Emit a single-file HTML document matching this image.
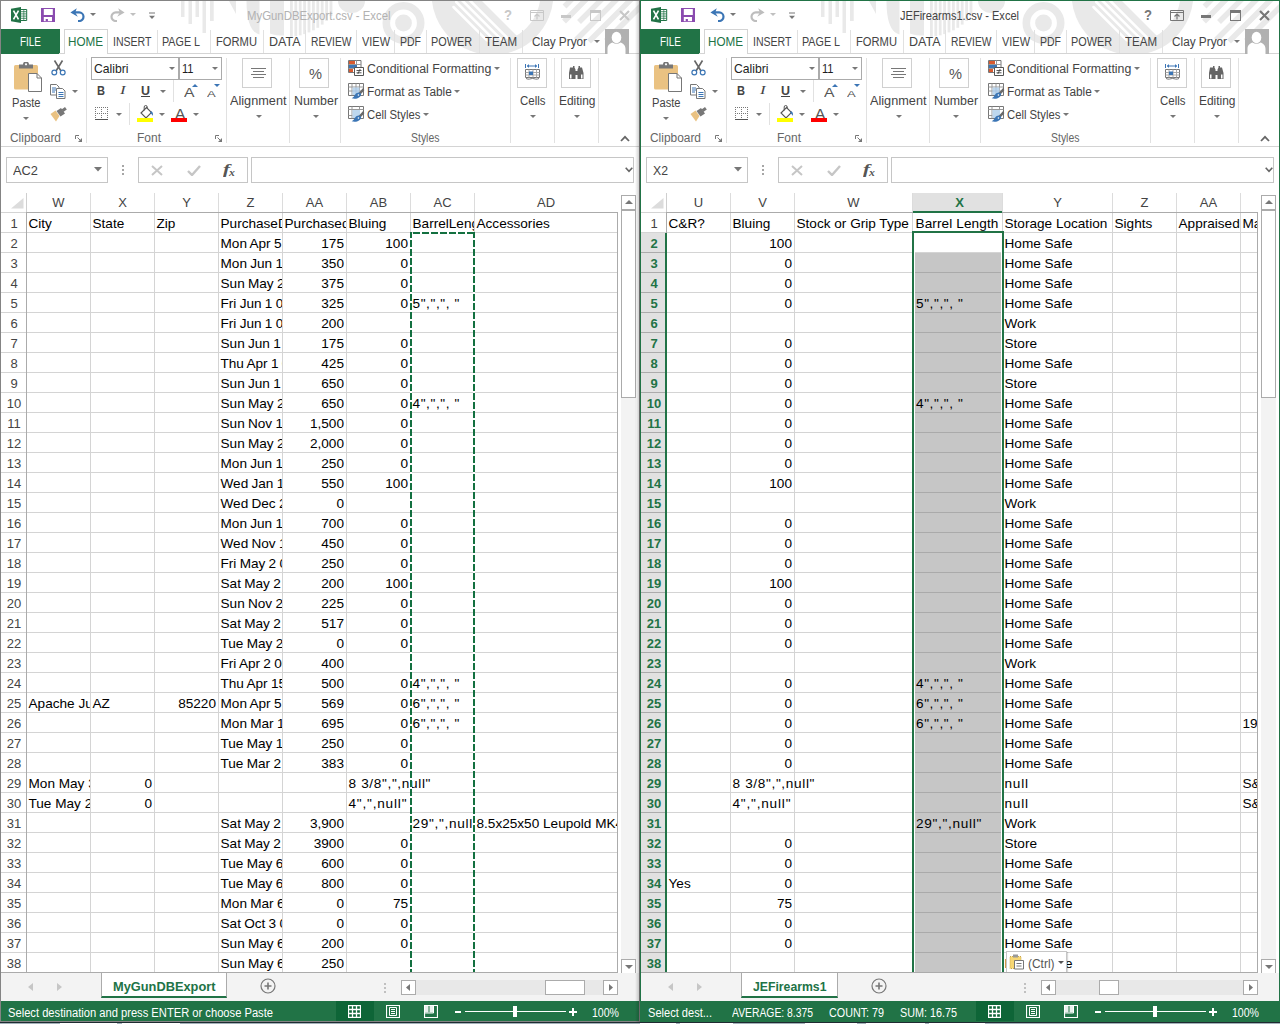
<!DOCTYPE html>
<html lang="en"><head><meta charset="utf-8"><title>Excel - MyGunDBExport.csv / JEFirearms1.csv</title>
<style>
html,body{margin:0;padding:0}
body{width:1280px;height:1024px;overflow:hidden;background:#8a8f96;font-family:"Liberation Sans",sans-serif;position:relative}
.win{position:absolute;top:0;width:640px;height:1022px;background:#fff;overflow:hidden}
.b{position:absolute;display:block}
.t{position:absolute;white-space:nowrap;line-height:20px;height:20px;transform-origin:0 50%}
.c{position:absolute;height:19px;line-height:19px;font-size:13.6px;color:#000;white-space:nowrap;overflow:hidden;box-sizing:border-box;padding:1px 2px 0 1.5px}
.c.r{text-align:right}
.rh{position:absolute;left:1px;width:26px;height:19px;line-height:22px;font-size:13px;color:#444;text-align:center}
.ch{position:absolute;top:193px;height:19px;line-height:19px;font-size:13px;color:#444;text-align:center}
</style></head>
<body>
<div class="b" style="left:0;top:1022px;width:1280px;height:1px;background:#1f2b31"></div>
<div class="b" style="left:0;top:1023px;width:1280px;height:1px;background:#a3b2ba"></div>
<div class="b" style="left:60px;top:1023px;width:57px;height:1px;background:#fff"></div>
<div class="b" style="left:122px;top:1023px;width:58px;height:1px;background:#fff"></div>
<div class="b" style="left:640px;top:1023px;width:36px;height:1px;background:#fff"></div>
<div class="b" style="left:680px;top:1023px;width:53px;height:1px;background:#fff"></div>
<div class="b" style="left:805px;top:1023px;width:52px;height:1px;background:#fff"></div>
<div class="b" style="left:866px;top:1023px;width:59px;height:1px;background:#fff"></div>
<div class="b" style="left:929px;top:1023px;width:56px;height:1px;background:#fff"></div>
<div class="win" style="left:0">
<svg class="b" style="left:0;top:0" width="640" height="53" viewBox="0 0 640 53"><defs><clipPath id="cpIn"><circle cx="492.5" cy="-6" r="48"/></clipPath></defs><rect x="181" y="1" width="3.5" height="16" fill="#e9e9e9"/><rect x="188.5" y="1" width="3.5" height="23" fill="#e9e9e9"/><rect x="195.5" y="1" width="3.5" height="16" fill="#e9e9e9"/><rect x="202.5" y="1" width="3.5" height="32" fill="#e9e9e9"/><rect x="210" y="1" width="3.7" height="20" fill="#e9e9e9"/><path d="M229 1h7v13z" fill="#e9e9e9"/><path d="M246.5 1h13v33.5c-8-2-13-12-13-33.5z" fill="#e9e9e9"/><path d="M270 1h14v34.5c-5 0-10-.3-14-2z" fill="#e9e9e9"/><rect x="290.0" y="1" width="2.8" height="35.8" fill="#e9e9e9"/><rect x="294.4" y="1" width="2.8" height="35.2" fill="#e9e9e9"/><rect x="298.8" y="1" width="2.8" height="34.3" fill="#e9e9e9"/><rect x="303.2" y="1" width="2.8" height="33.1" fill="#e9e9e9"/><rect x="307.6" y="1" width="2.8" height="31.4" fill="#e9e9e9"/><rect x="312.0" y="1" width="2.8" height="29.3" fill="#e9e9e9"/><rect x="316.4" y="1" width="2.8" height="26.8" fill="#e9e9e9"/><rect x="320.8" y="1" width="2.8" height="23.6" fill="#e9e9e9"/><rect x="325.2" y="1" width="2.8" height="19.8" fill="#e9e9e9"/><rect x="329.6" y="1" width="2.8" height="15.1" fill="#e9e9e9"/><path d="M338 1a13.5 12 0 0 0 27 0z" fill="#e9e9e9"/><circle cx="403.5" cy="23" r="17.2" fill="none" stroke="#e9e9e9" stroke-width="7.6"/><circle cx="403.5" cy="23" r="8.4" fill="#e9e9e9"/><circle cx="492.5" cy="-6" r="61" fill="#e9e9e9"/><g clip-path="url(#cpIn)"><path d="M481 0l60 60h80v-80h-140z" fill="#fff"/><path d="M453.5 7l60 60" stroke="#fff" stroke-width="2.5" stroke-linecap="round"/><path d="M456.2 2l60 60" stroke="#fff" stroke-width="2.5" stroke-linecap="round"/><path d="M461.8 0l60 60" stroke="#fff" stroke-width="2.5" stroke-linecap="round"/><path d="M469.5 0l60 60" stroke="#fff" stroke-width="2.5" stroke-linecap="round"/></g><path d="M564.5 6.5L575 -4" stroke="#e9e9e9" stroke-width="5.5"/><path d="M564 21.5L590 -4.5" stroke="#e9e9e9" stroke-width="5.5"/><path d="M579 22L606 -5" stroke="#e9e9e9" stroke-width="5.5"/><path d="M576 40L621 -5" stroke="#e9e9e9" stroke-width="5.5"/><path d="M589 41.5L640 -9.5" stroke="#e9e9e9" stroke-width="5.5"/><path d="M606 41L650 -3" stroke="#e9e9e9" stroke-width="5.5"/></svg>
<svg class="b" style="left:11px;top:7px" width="17" height="16" viewBox="0 0 17 16"><path d="M9.500 2.500h6.200v11h-6.200z" fill="#fff" stroke="#217346" stroke-width="1"/><path d="M10 4.700h5.500M10 6.900h5.500M10 9.100h5.500M10 11.300h5.500" stroke="#217346" stroke-width=".8"/><path d="M12.800 2.500v11" stroke="#217346" stroke-width=".7"/><path d="M0 1.800l10-1.800v16l-10-1.800z" fill="#217346"/><path d="M2.500 3.600l5 8.800M7.500 3.600l-5 8.800" stroke="#fff" stroke-width="1.600"/></svg>
<svg class="b" style="left:41px;top:8px" width="14" height="14" viewBox="0 0 14 14"><path d="M0 0h14v14h-14z" fill="#8a4baf"/><path d="M2.800 1h9v6h-9z" fill="#fff"/><path d="M2.800 9h8.200v4.200h-8.200z" fill="#fff"/><path d="M4.700 11h2.200v2.200h-2.200z" fill="#8a4baf"/></svg>
<svg class="b" style="left:70px;top:8px" width="15" height="14" viewBox="0 0 15 14"><path d="M3.500 4.400h5.700a4.300 4.300 0 0 1 0 8.600h-1.200" fill="none" stroke="#3b75b5" stroke-width="2.200"/><path d="M6.800 0.200l-6.400 4.200l7.400 4.400l-2.600-4.400z" fill="#3b75b5"/></svg>
<svg class="b" style="left:90px;top:13px" width="6" height="4" viewBox="0 0 6 4"><path d="M0 0h6l-3.0 3.0z" fill="#777"/></svg>
<svg class="b" style="left:110px;top:8px" width="15" height="14" viewBox="0 0 15 14"><path d="M11.500 4.400h-5.700a4.300 4.300 0 0 0 0 8.600h1.200" fill="none" stroke="#bdbdbd" stroke-width="2.200"/><path d="M8.200 0.200l6.400 4.200l-7.400 4.400l2.600-4.400z" fill="#bdbdbd"/></svg>
<svg class="b" style="left:130px;top:13px" width="6" height="4" viewBox="0 0 6 4"><path d="M0 0h6l-3.0 3.0z" fill="#c0c0c0"/></svg>
<svg class="b" style="left:149px;top:12px" width="6" height="7" viewBox="0 0 6 7"><path d="M0 1h6" stroke="#777" stroke-width="1"/><path d="M0 3.700h6l-3 3.200z" fill="#777"/></svg>
<span class="t" style="left:247.0px;top:5.50px;font-size:13px;color:#b2b2b2;transform:scaleX(0.8751);">MyGunDBExport.csv - Excel</span>
<span class="t" style="left:503.5px;top:5.15px;font-size:14px;color:#c8c8c8;transform:scaleX(0.9355);font-weight:bold;">?</span>
<svg class="b" style="left:530px;top:10px" width="14" height="11" viewBox="0 0 14 11"><path d="M0.500 0.500h13v10h-13z" fill="none" stroke="#c8c8c8"/><path d="M0.500 2.500h13" stroke="#c8c8c8"/><path d="M7 9.500v-5M4.500 6.500l2.500-2.500l2.500 2.500" fill="none" stroke="#c8c8c8" stroke-width="1.200"/></svg>
<div class="b" style="left:561px;top:15px;width:10px;height:3px;background:#c8c8c8"></div>
<div class="b" style="left:590px;top:10px;width:11px;height:11px;border:1px solid #c8c8c8;border-top-width:3px;box-sizing:border-box"></div>
<svg class="b" style="left:619px;top:10px" width="11" height="11" viewBox="0 0 11 11"><path d="M1 1l9 9M10 1l-9 9" stroke="#c8c8c8" stroke-width="2.2" fill="none"/></svg>
<div class="b" style="left:1px;top:29px;width:59px;height:25px;background:#217346"></div>
<span class="t" style="left:20.0px;top:31.84px;font-size:12px;color:#fff;transform:scaleX(0.8287);">FILE</span>
<div class="b" style="left:59px;top:53px;width:581px;height:1px;background:#d4d4d4"></div>
<div class="b" style="left:64px;top:29px;width:44px;height:25px;background:#fff;border:1px solid #d4d4d4;border-bottom:0;box-sizing:border-box"></div>
<span class="t" style="left:68.0px;top:31.84px;font-size:12px;color:#217346;transform:scaleX(0.9722);">HOME</span>
<span class="t" style="left:113.0px;top:31.84px;font-size:12px;color:#444;transform:scaleX(0.8792);">INSERT</span>
<span class="t" style="left:162.0px;top:31.84px;font-size:12px;color:#444;transform:scaleX(0.8949);">PAGE L</span>
<span class="t" style="left:215.5px;top:31.84px;font-size:12px;color:#444;transform:scaleX(0.9320);">FORMU</span>
<span class="t" style="left:269.0px;top:31.84px;font-size:12px;color:#444;transform:scaleX(1.0423);">DATA</span>
<span class="t" style="left:310.5px;top:31.84px;font-size:12px;color:#444;transform:scaleX(0.8555);">REVIEW</span>
<span class="t" style="left:361.5px;top:31.84px;font-size:12px;color:#444;transform:scaleX(0.9130);">VIEW</span>
<span class="t" style="left:400.0px;top:31.84px;font-size:12px;color:#444;transform:scaleX(0.8750);">PDF</span>
<span class="t" style="left:430.5px;top:31.84px;font-size:12px;color:#444;transform:scaleX(0.9044);">POWER</span>
<span class="t" style="left:485.0px;top:31.84px;font-size:12px;color:#444;transform:scaleX(0.9600);">TEAM</span>
<div class="b" style="left:157px;top:30px;width:1px;height:23px;background:#e1e1e1"></div>
<div class="b" style="left:210px;top:30px;width:1px;height:23px;background:#e1e1e1"></div>
<div class="b" style="left:263px;top:30px;width:1px;height:23px;background:#e1e1e1"></div>
<div class="b" style="left:305px;top:30px;width:1px;height:23px;background:#e1e1e1"></div>
<div class="b" style="left:356px;top:30px;width:1px;height:23px;background:#e1e1e1"></div>
<div class="b" style="left:394px;top:30px;width:1px;height:23px;background:#e1e1e1"></div>
<div class="b" style="left:426px;top:30px;width:1px;height:23px;background:#e1e1e1"></div>
<div class="b" style="left:479px;top:30px;width:1px;height:23px;background:#e1e1e1"></div>
<div class="b" style="left:522px;top:30px;width:1px;height:23px;background:#e1e1e1"></div>
<span class="t" style="left:531.5px;top:31.84px;font-size:12px;color:#444;transform:scaleX(0.9820);">Clay Pryor</span>
<svg class="b" style="left:594px;top:40px" width="6" height="4" viewBox="0 0 6 4"><path d="M0 0h6l-3.0 3.0z" fill="#777"/></svg>
<svg class="b" style="left:605px;top:29px" width="24" height="25" viewBox="0 0 24 25"><path d="M0 0h24v25h-24z" fill="#b1b1b1"/><ellipse cx="11.500" cy="8.500" rx="4.800" ry="5.800" fill="#fff"/><path d="M2.500 25v-5c0-4 3-6 5-6.500c2.500 1.800 5.500 1.800 8 0c2 .5 5 2.500 5 6.500v5z" fill="#fff"/></svg>
<svg class="b" style="left:14px;top:62px" width="29" height="31" viewBox="0 0 29 31"><rect x="0" y="3" width="24" height="24.500" rx="1.500" fill="#eac282"/><path d="M5 2.500h4a3 3 0 0 1 6 0h4v4h-14z" fill="#777"/><circle cx="12" cy="2.300" r="1.100" fill="#fff"/><path d="M14.500 11.500h8.500l4.500 4.500v13.500h-13z" fill="#fff" stroke="#777"/><path d="M23 11.500v4.500h4.500" fill="none" stroke="#777"/></svg>
<span class="t" style="left:12.0px;top:92.84px;font-size:12px;color:#444;transform:scaleX(0.9288);">Paste</span>
<svg class="b" style="left:23px;top:117px" width="6" height="4" viewBox="0 0 6 4"><path d="M0 0h6l-3.0 3.0z" fill="#777"/></svg>
<svg class="b" style="left:51px;top:60px" width="15" height="16" viewBox="0 0 15 16"><path d="M3.500 0.500l6.500 10.500M11.500 0.500l-6.500 10.500" stroke="#666" stroke-width="1.600" fill="none"/><circle cx="3.300" cy="12.500" r="2.400" fill="none" stroke="#3b75b5" stroke-width="1.200"/><circle cx="11.700" cy="12.500" r="2.400" fill="none" stroke="#3b75b5" stroke-width="1.200"/></svg>
<svg class="b" style="left:50px;top:84px" width="16" height="15" viewBox="0 0 16 15"><path d="M0.500 0.500h6l2.500 2.500v8h-8.500z" fill="#fff" stroke="#777"/><path d="M2 4h4M2 6h4M2 8h3" stroke="#3b75b5"/><path d="M6.500 4.500h6l2.500 2.500v7.500h-8.500z" fill="#fff" stroke="#777"/><path d="M8.500 8.500h5M8.500 10.500h5M8.500 12.500h5" stroke="#3b75b5"/></svg>
<svg class="b" style="left:72px;top:90px" width="6" height="4" viewBox="0 0 6 4"><path d="M0 0h6l-3.0 3.0z" fill="#777"/></svg>
<svg class="b" style="left:50px;top:107px" width="17" height="15" viewBox="0 0 17 15"><path d="M0.500 7l5-3.500l4 5.500l-3.500 5.500z" fill="#eac282"/><path d="M6 3.500l4.500-3l4 5.500l-4.500 3z" fill="#777" transform="translate(0.500 0.500)"/><path d="M11.500 2.500l3.500-2.500l1.800 2.500l-3.500 2.500z" fill="#777"/></svg>
<span class="t" style="left:10.0px;top:127.84px;font-size:12px;color:#666;transform:scaleX(0.9929);">Clipboard</span>
<svg class="b" style="left:75px;top:135px" width="7" height="7" viewBox="0 0 7 7"><path d="M0.500 4v-3.500h3.500" fill="none" stroke="#777"/><path d="M2.500 2.500l3 3" stroke="#777"/><path d="M7 3v4h-4z" fill="#777"/></svg>
<div class="b" style="left:86px;top:58px;width:1px;height:85px;background:#e1e1e1"></div>
<div class="b" style="left:91px;top:57px;width:88px;height:23px;border:1px solid #ababab;box-sizing:border-box;background:#fff"></div>
<div class="b" style="left:179px;top:57px;width:43px;height:23px;border:1px solid #ababab;box-sizing:border-box;background:#fff"></div>
<span class="t" style="left:94.0px;top:59.39px;font-size:13.3px;color:#1e1e1e;transform:scaleX(0.9153);">Calibri</span>
<svg class="b" style="left:169px;top:67px" width="6" height="4" viewBox="0 0 6 4"><path d="M0 0h6l-3.0 3.0z" fill="#777"/></svg>
<span class="t" style="left:182.0px;top:59.39px;font-size:13.3px;color:#1e1e1e;transform:scaleX(0.8329);">11</span>
<svg class="b" style="left:212px;top:67px" width="6" height="4" viewBox="0 0 6 4"><path d="M0 0h6l-3.0 3.0z" fill="#777"/></svg>
<span class="t" style="left:97.0px;top:81.17px;font-size:12.5px;color:#444;transform:scaleX(0.8862);font-weight:bold;">B</span>
<span class="t" style="left:120px;top:80px;font-size:13.5px;color:#444;font-style:italic;font-family:'Liberation Serif',serif;transform:scaleX(1.25)">I</span>
<span class="t" style="left:141.0px;top:81.17px;font-size:12.5px;color:#444;transform:scaleX(0.9970);font-weight:bold;">U</span>
<div class="b" style="left:141px;top:96px;width:9px;height:1px;background:#444"></div>
<svg class="b" style="left:160px;top:90px" width="6" height="4" viewBox="0 0 6 4"><path d="M0 0h6l-3.0 3.0z" fill="#777"/></svg>
<div class="b" style="left:173px;top:80px;width:1px;height:22px;background:#e1e1e1"></div>
<span class="t" style="left:184.0px;top:82.50px;font-size:13px;color:#555;transform:scaleX(1.2109);">A</span>
<svg class="b" style="left:192px;top:84px" width="6" height="3" viewBox="0 0 6 3"><path d="M0 3h6l-3-3z" fill="#3b75b5"/></svg>
<span class="t" style="left:206.8px;top:83.71px;font-size:9.5px;color:#555;transform:scaleX(1.3730);">A</span>
<svg class="b" style="left:214px;top:84px" width="6" height="3" viewBox="0 0 6 3"><path d="M0 0h6l-3 3z" fill="#3b75b5"/></svg>
<svg class="b" style="left:95px;top:107px" width="14" height="14" viewBox="0 0 14 14"><g shape-rendering="crispEdges"><path d="M0 0.500h13M0 6.500h13M0.500 0v12M6.500 0v12M12.500 0v12" stroke="#777" stroke-dasharray="1 1" fill="none"/><path d="M0 12.500h13" stroke="#555" stroke-width="1"/></g></svg>
<svg class="b" style="left:116px;top:113px" width="6" height="4" viewBox="0 0 6 4"><path d="M0 0h6l-3.0 3.0z" fill="#777"/></svg>
<div class="b" style="left:129px;top:103px;width:1px;height:22px;background:#e1e1e1"></div>
<svg class="b" style="left:137px;top:105px" width="18" height="18" viewBox="0 0 18 18"><path d="M4 8l5.500-5.500l5 5l-5.500 5.500z" fill="#fff" stroke="#555" stroke-width="1.100"/><path d="M7.200 5.500v-3.500a1.500 1.500 0 0 1 3 0v1.500" fill="none" stroke="#555"/><path d="M14 6c2 1 2.500 3 1.500 5c-.3-1.500-1-2.500-2.500-3z" fill="#3b75b5"/><path d="M0 13h16v4h-16z" fill="#ffff00"/></svg>
<svg class="b" style="left:159px;top:113px" width="6" height="4" viewBox="0 0 6 4"><path d="M0 0h6l-3.0 3.0z" fill="#777"/></svg>
<span class="t" style="left:174.5px;top:103.65px;font-size:14px;color:#555;transform:scaleX(1.1030);">A</span>
<div class="b" style="left:171px;top:118px;width:16px;height:4px;background:#ff0000"></div>
<svg class="b" style="left:193px;top:113px" width="6" height="4" viewBox="0 0 6 4"><path d="M0 0h6l-3.0 3.0z" fill="#777"/></svg>
<span class="t" style="left:136.5px;top:127.84px;font-size:12px;color:#666;transform:scaleX(0.9995);">Font</span>
<svg class="b" style="left:215px;top:135px" width="7" height="7" viewBox="0 0 7 7"><path d="M0.500 4v-3.500h3.500" fill="none" stroke="#777"/><path d="M2.500 2.500l3 3" stroke="#777"/><path d="M7 3v4h-4z" fill="#777"/></svg>
<div class="b" style="left:226px;top:58px;width:1px;height:85px;background:#e1e1e1"></div>
<div class="b" style="left:242px;top:58px;width:30px;height:30px;border:1px solid #d0d0d0;box-sizing:border-box;background:#fff"></div>
<svg class="b" style="left:251px;top:67px" width="15" height="12" viewBox="0 0 15 12"><path d="M0 1.500h15M2 4.500h11M0 7.500h15M2 10.500h11" stroke="#777" stroke-width="1"/></svg>
<span class="t" style="left:230.0px;top:90.84px;font-size:12px;color:#444;transform:scaleX(1.0588);">Alignment</span>
<svg class="b" style="left:256px;top:115px" width="6" height="4" viewBox="0 0 6 4"><path d="M0 0h6l-3.0 3.0z" fill="#777"/></svg>
<div class="b" style="left:289px;top:58px;width:1px;height:85px;background:#e1e1e1"></div>
<div class="b" style="left:299px;top:58px;width:30px;height:30px;border:1px solid #d0d0d0;box-sizing:border-box;background:#fff"></div>
<span class="t" style="left:308.5px;top:63.98px;font-size:14.5px;color:#555;transform:scaleX(1.0083);">%</span>
<span class="t" style="left:293.5px;top:90.84px;font-size:12px;color:#444;transform:scaleX(1.0309);">Number</span>
<svg class="b" style="left:313px;top:115px" width="6" height="4" viewBox="0 0 6 4"><path d="M0 0h6l-3.0 3.0z" fill="#777"/></svg>
<div class="b" style="left:340px;top:58px;width:1px;height:85px;background:#e1e1e1"></div>
<svg class="b" style="left:348px;top:60px" width="17" height="17" viewBox="0 0 17 17"><path d="M0.500 0.500h12.500v12h-12.500z" fill="#fff" stroke="#777"/><path d="M0.500 4.500h12.500M0.500 8.500h12.500M8.500 0.500v12" stroke="#999" fill="none"/><path d="M1 1h6v3h-6z" fill="#d85a30"/><path d="M1 5h8v3h-8z" fill="#3b75b5"/><path d="M1 9h4v3h-4z" fill="#d85a30"/><path d="M6.500 7.500h9v8h-9z" fill="#fff" stroke="#555"/><path d="M8.500 10.500h5M8.500 12.800h5M12.200 9l-2.400 5" stroke="#444" stroke-width=".9"/></svg>
<span class="t" style="left:366.7px;top:58.84px;font-size:12px;color:#444;transform:scaleX(1.0296);">Conditional Formatting</span>
<svg class="b" style="left:494px;top:67px" width="6" height="4" viewBox="0 0 6 4"><path d="M0 0h6l-3.0 3.0z" fill="#777"/></svg>
<svg class="b" style="left:348px;top:83px" width="18" height="17" viewBox="0 0 18 17"><path d="M0.500 0.500h15v12h-15z" fill="#fff" stroke="#777"/><path d="M0.500 4h15M0.500 8h15M4 0.500v12M8 0.500v12M11.500 0.500v12" stroke="#999" fill="none"/><path d="M4.500 4.500h7v7.500h-7z" fill="#bdd7ee"/><path d="M4.500 8h7M8 4.500v7.500" stroke="#9dbbd8" stroke-width=".6"/><path d="M15.800 4.200l.400 3.300l-3.900 4.200l-1.700-1.800z" fill="#6a6a6a"/><path d="M12.700 10.300c-1.500-1.300-4.300-.700-5.700 1.500c-.800 1.400-1.600 2.500-3.300 3.500c3 .900 6.600.300 8.300-1.600c1.200-1.300 1.400-2.600.700-3.400z" fill="#3b75b5"/><circle cx="10.400" cy="12" r=".800" fill="#fff"/></svg>
<span class="t" style="left:366.7px;top:81.84px;font-size:12px;color:#444;transform:scaleX(0.9882);">Format as Table</span>
<svg class="b" style="left:454px;top:90px" width="6" height="4" viewBox="0 0 6 4"><path d="M0 0h6l-3.0 3.0z" fill="#777"/></svg>
<svg class="b" style="left:348px;top:106px" width="18" height="17" viewBox="0 0 18 17"><path d="M0.500 0.500h15v12h-15z" fill="#fff" stroke="#777"/><path d="M0.500 3.500h15M0.500 9.500h4M4 0.500v12M11.500 0.500v3" stroke="#999" fill="none"/><path d="M4.500 4h7.500v8h-7.500z" fill="#bdd7ee"/><path d="M15.800 4.200l.400 3.300l-3.900 4.200l-1.700-1.800z" fill="#6a6a6a"/><path d="M12.700 10.300c-1.500-1.300-4.300-.700-5.700 1.500c-.800 1.400-1.600 2.500-3.300 3.500c3 .900 6.600.300 8.300-1.600c1.200-1.300 1.400-2.600.700-3.400z" fill="#3b75b5"/><circle cx="10.400" cy="12" r=".800" fill="#fff"/></svg>
<span class="t" style="left:366.7px;top:104.84px;font-size:12px;color:#444;transform:scaleX(0.9403);">Cell Styles</span>
<svg class="b" style="left:423px;top:113px" width="6" height="4" viewBox="0 0 6 4"><path d="M0 0h6l-3.0 3.0z" fill="#777"/></svg>
<span class="t" style="left:411.0px;top:127.84px;font-size:12px;color:#666;transform:scaleX(0.8721);">Styles</span>
<div class="b" style="left:510px;top:58px;width:1px;height:85px;background:#e1e1e1"></div>
<div class="b" style="left:517px;top:58px;width:30px;height:30px;border:1px solid #d0d0d0;box-sizing:border-box;background:#fff"></div>
<svg class="b" style="left:524px;top:63px" width="17" height="17" viewBox="0 0 17 17"><path d="M1.500 1v4M14.500 1v4" stroke="#3b75b5" stroke-width="1"/><path d="M3 3h10" stroke="#3b75b5" stroke-width="1"/><path d="M3 3l2-2v4zM13 3l-2-2v4z" fill="#3b75b5"/><path d="M1.500 6.500h14v8h-14z" fill="#fff" stroke="#777"/><path d="M1.500 9.500h14M1.500 12h14M5 6.500v8M9 6.500v8M12.500 6.500v8" stroke="#aaa" fill="none"/><path d="M5 8.500h4v3.500h-4z" fill="#3b75b5"/><path d="M2 15.500c3 1.500 4.500 0 6.500 0s4 1.500 6.500 0" stroke="#777" fill="none"/></svg>
<span class="t" style="left:520.0px;top:90.84px;font-size:12px;color:#444;transform:scaleX(0.9561);">Cells</span>
<svg class="b" style="left:530px;top:115px" width="6" height="4" viewBox="0 0 6 4"><path d="M0 0h6l-3.0 3.0z" fill="#777"/></svg>
<div class="b" style="left:554px;top:58px;width:1px;height:85px;background:#e1e1e1"></div>
<div class="b" style="left:561px;top:58px;width:30px;height:30px;border:1px solid #d0d0d0;box-sizing:border-box;background:#fff"></div>
<svg class="b" style="left:568px;top:65px" width="17" height="15" viewBox="0 0 17 15"><path d="M3 2.500h3v-1.500h1.500v1.500l1 2v9.500h-6.500v-6z" fill="#666" transform="translate(-1 0)"/><path d="M9.500 4.500l1-2v-1.500h1.500v1.500h2l1.500 5.500v6h-6z" fill="#666"/><path d="M7 6h3v4h-3z" fill="#666"/><path d="M2 9.500h1.500v4h-1.500zM13 9.500h1.500v4h-1.500z" fill="#fff"/></svg>
<span class="t" style="left:558.5px;top:90.84px;font-size:12px;color:#444;transform:scaleX(0.9948);">Editing</span>
<svg class="b" style="left:574px;top:115px" width="6" height="4" viewBox="0 0 6 4"><path d="M0 0h6l-3.0 3.0z" fill="#777"/></svg>
<div class="b" style="left:598px;top:58px;width:1px;height:85px;background:#e1e1e1"></div>
<svg class="b" style="left:620px;top:135px" width="10" height="7" viewBox="0 0 10 7"><path d="M1 6l4-4.200l4 4.200" fill="none" stroke="#666" stroke-width="1.800"/></svg>
<div class="b" style="left:1px;top:146px;width:638px;height:1px;background:#d4d4d4"></div>
<div class="b" style="left:6px;top:157px;width:102px;height:26px;border:1px solid #c6c6c6;box-sizing:border-box;background:#fff"></div>
<span class="t" style="left:12.5px;top:161.39px;font-size:13.3px;color:#444;transform:scaleX(0.9663);">AC2</span>
<svg class="b" style="left:94px;top:167px" width="8" height="5" viewBox="0 0 8 5"><path d="M0 0h8l-4 4.5z" fill="#777"/></svg>
<div class="b" style="left:122px;top:165px;width:2px;height:2px;background:#a6a6a6"></div>
<div class="b" style="left:122px;top:169px;width:2px;height:2px;background:#a6a6a6"></div>
<div class="b" style="left:122px;top:173px;width:2px;height:2px;background:#a6a6a6"></div>
<div class="b" style="left:138px;top:157px;width:110px;height:26px;border:1px solid #c6c6c6;box-sizing:border-box;background:#fff"></div>
<svg class="b" style="left:151px;top:165px" width="12" height="11" viewBox="0 0 12 11"><path d="M1 1l10 9M11 1l-10 9" stroke="#c6c6c6" stroke-width="2" fill="none"/></svg>
<svg class="b" style="left:187px;top:165px" width="14" height="11" viewBox="0 0 14 11"><path d="M1 6l4 4l8-9" stroke="#c6c6c6" stroke-width="2.4" fill="none"/></svg>
<span class="t" style="left:222.5px;top:160.15px;font-size:14px;color:#555;transform:scaleX(1.5014);font-weight:bold;font-style:italic;font-family:'Liberation Serif',serif;">f</span>
<span class="t" style="left:229.0px;top:162.71px;font-size:9.5px;color:#555;transform:scaleX(1.2302);font-weight:bold;font-style:italic;font-family:'Liberation Serif',serif;">x</span>
<div class="b" style="left:251px;top:157px;width:383px;height:26px;border:1px solid #c6c6c6;box-sizing:border-box;background:#fff"></div>
<svg class="b" style="left:625px;top:167px" width="8" height="6" viewBox="0 0 8 6"><path d="M0.7 0.7l3.3 3.6l3.3-3.6" stroke="#666" stroke-width="1.6" fill="none"/></svg>
<div class="b" style="left:1px;top:213px;width:616px;height:760px;background:repeating-linear-gradient(180deg,#fff 0,#fff 19px,#d4d4d4 19px,#d4d4d4 20px)"></div>
<div class="b" style="left:90px;top:193px;width:1px;height:19px;background:#dcdcdc"></div>
<div class="b" style="left:90px;top:213px;width:1px;height:759px;background:#d4d4d4"></div>
<div class="b" style="left:154px;top:193px;width:1px;height:19px;background:#dcdcdc"></div>
<div class="b" style="left:154px;top:213px;width:1px;height:759px;background:#d4d4d4"></div>
<div class="b" style="left:218px;top:193px;width:1px;height:19px;background:#dcdcdc"></div>
<div class="b" style="left:218px;top:213px;width:1px;height:759px;background:#d4d4d4"></div>
<div class="b" style="left:282px;top:193px;width:1px;height:19px;background:#dcdcdc"></div>
<div class="b" style="left:282px;top:213px;width:1px;height:759px;background:#d4d4d4"></div>
<div class="b" style="left:346px;top:193px;width:1px;height:19px;background:#dcdcdc"></div>
<div class="b" style="left:346px;top:213px;width:1px;height:759px;background:#d4d4d4"></div>
<div class="b" style="left:410px;top:193px;width:1px;height:19px;background:#dcdcdc"></div>
<div class="b" style="left:410px;top:213px;width:1px;height:759px;background:#d4d4d4"></div>
<div class="b" style="left:474px;top:193px;width:1px;height:19px;background:#dcdcdc"></div>
<div class="b" style="left:474px;top:213px;width:1px;height:759px;background:#d4d4d4"></div>
<div class="b" style="left:1px;top:212px;width:25px;height:1px;background:#d4d4d4"></div>
<div class="b" style="left:26px;top:212px;width:591px;height:1px;background:#ababab"></div>
<div class="b" style="left:26px;top:193px;width:1px;height:19px;background:#cfcfcf"></div>
<div class="b" style="left:26px;top:212px;width:1px;height:761px;background:#ababab"></div>
<div class="b" style="left:617px;top:212px;width:1px;height:761px;background:#ababab"></div>
<svg class="b" style="left:11px;top:198px" width="13" height="11" viewBox="0 0 13 11"><path d="M12.500 0v10.500h-12.500z" fill="#dcdcdc"/></svg>
<div class="ch" style="left:27px;width:63px">W</div>
<div class="ch" style="left:91px;width:63px">X</div>
<div class="ch" style="left:155px;width:63px">Y</div>
<div class="ch" style="left:219px;width:63px">Z</div>
<div class="ch" style="left:283px;width:63px">AA</div>
<div class="ch" style="left:347px;width:63px">AB</div>
<div class="ch" style="left:411px;width:63px">AC</div>
<div class="ch" style="left:475px;width:142px">AD</div>
<div class="rh" style="top:213px;">1</div>
<div class="rh" style="top:233px;">2</div>
<div class="rh" style="top:253px;">3</div>
<div class="rh" style="top:273px;">4</div>
<div class="rh" style="top:293px;">5</div>
<div class="rh" style="top:313px;">6</div>
<div class="rh" style="top:333px;">7</div>
<div class="rh" style="top:353px;">8</div>
<div class="rh" style="top:373px;">9</div>
<div class="rh" style="top:393px;">10</div>
<div class="rh" style="top:413px;">11</div>
<div class="rh" style="top:433px;">12</div>
<div class="rh" style="top:453px;">13</div>
<div class="rh" style="top:473px;">14</div>
<div class="rh" style="top:493px;">15</div>
<div class="rh" style="top:513px;">16</div>
<div class="rh" style="top:533px;">17</div>
<div class="rh" style="top:553px;">18</div>
<div class="rh" style="top:573px;">19</div>
<div class="rh" style="top:593px;">20</div>
<div class="rh" style="top:613px;">21</div>
<div class="rh" style="top:633px;">22</div>
<div class="rh" style="top:653px;">23</div>
<div class="rh" style="top:673px;">24</div>
<div class="rh" style="top:693px;">25</div>
<div class="rh" style="top:713px;">26</div>
<div class="rh" style="top:733px;">27</div>
<div class="rh" style="top:753px;">28</div>
<div class="rh" style="top:773px;">29</div>
<div class="rh" style="top:793px;">30</div>
<div class="rh" style="top:813px;">31</div>
<div class="rh" style="top:833px;">32</div>
<div class="rh" style="top:853px;">33</div>
<div class="rh" style="top:873px;">34</div>
<div class="rh" style="top:893px;">35</div>
<div class="rh" style="top:913px;">36</div>
<div class="rh" style="top:933px;">37</div>
<div class="rh" style="top:953px;">38</div>
<div class="c" style="left:27px;top:213px;width:63px;">City</div>
<div class="c" style="left:91px;top:213px;width:63px;">State</div>
<div class="c" style="left:155px;top:213px;width:63px;">Zip</div>
<div class="c" style="left:219px;top:213px;width:63px;">PurchaseDate</div>
<div class="c" style="left:283px;top:213px;width:63px;">PurchasedPrice</div>
<div class="c" style="left:347px;top:213px;width:63px;">Bluing</div>
<div class="c" style="left:411px;top:213px;width:63px;">BarrelLength</div>
<div class="c" style="left:475px;top:213px;width:142px;">Accessories</div>
<div class="c" style="left:219px;top:233px;width:63px;word-spacing:-.5px;">Mon Apr 5 00:00:00 MST 2004</div>
<div class="c" style="left:219px;top:253px;width:63px;word-spacing:-.5px;">Mon Jun 1 00:00:00 MST 2009</div>
<div class="c" style="left:219px;top:273px;width:63px;word-spacing:-.5px;">Sun May 2 00:00:00 MST 2010</div>
<div class="c" style="left:219px;top:293px;width:63px;word-spacing:-.5px;">Fri Jun 1 00:00:00 MST 2007</div>
<div class="c" style="left:219px;top:313px;width:63px;word-spacing:-.5px;">Fri Jun 1 00:00:00 MST 2007</div>
<div class="c" style="left:219px;top:333px;width:63px;word-spacing:-.5px;">Sun Jun 1 00:00:00 MST 2008</div>
<div class="c" style="left:219px;top:353px;width:63px;word-spacing:-.5px;">Thu Apr 1 00:00:00 MST 2010</div>
<div class="c" style="left:219px;top:373px;width:63px;word-spacing:-.5px;">Sun Jun 1 00:00:00 MST 2008</div>
<div class="c" style="left:219px;top:393px;width:63px;word-spacing:-.5px;">Sun May 2 00:00:00 MST 2010</div>
<div class="c" style="left:219px;top:413px;width:63px;word-spacing:-.5px;">Sun Nov 1 00:00:00 MST 2009</div>
<div class="c" style="left:219px;top:433px;width:63px;word-spacing:-.5px;">Sun May 2 00:00:00 MST 2010</div>
<div class="c" style="left:219px;top:453px;width:63px;word-spacing:-.5px;">Mon Jun 1 00:00:00 MST 2009</div>
<div class="c" style="left:219px;top:473px;width:63px;word-spacing:-.5px;">Wed Jan 1 00:00:00 MST 2003</div>
<div class="c" style="left:219px;top:493px;width:63px;word-spacing:-.5px;">Wed Dec 2 00:00:00 MST 2009</div>
<div class="c" style="left:219px;top:513px;width:63px;word-spacing:-.5px;">Mon Jun 1 00:00:00 MST 2009</div>
<div class="c" style="left:219px;top:533px;width:63px;word-spacing:-.5px;">Wed Nov 1 00:00:00 MST 2006</div>
<div class="c" style="left:219px;top:553px;width:63px;word-spacing:-.5px;">Fri May 2 00:00:00 MST 2008</div>
<div class="c" style="left:219px;top:573px;width:63px;word-spacing:-.5px;">Sat May 2 00:00:00 MST 2009</div>
<div class="c" style="left:219px;top:593px;width:63px;word-spacing:-.5px;">Sun Nov 2 00:00:00 MST 2008</div>
<div class="c" style="left:219px;top:613px;width:63px;word-spacing:-.5px;">Sat May 2 00:00:00 MST 2009</div>
<div class="c" style="left:219px;top:633px;width:63px;word-spacing:-.5px;">Tue May 2 00:00:00 MST 2006</div>
<div class="c" style="left:219px;top:653px;width:63px;word-spacing:-.5px;">Fri Apr 2 00:00:00 MST 2010</div>
<div class="c" style="left:219px;top:673px;width:63px;word-spacing:-.5px;">Thu Apr 15 00:00:00 MST 2010</div>
<div class="c" style="left:219px;top:693px;width:63px;word-spacing:-.5px;">Mon Apr 5 00:00:00 MST 2010</div>
<div class="c" style="left:219px;top:713px;width:63px;word-spacing:-.5px;">Mon Mar 1 00:00:00 MST 2010</div>
<div class="c" style="left:219px;top:733px;width:63px;word-spacing:-.5px;">Tue May 1 00:00:00 MST 2007</div>
<div class="c" style="left:219px;top:753px;width:63px;word-spacing:-.5px;">Tue Mar 2 00:00:00 MST 2010</div>
<div class="c" style="left:219px;top:813px;width:63px;word-spacing:-.5px;">Sat May 2 00:00:00 MST 2009</div>
<div class="c" style="left:219px;top:833px;width:63px;word-spacing:-.5px;">Sat May 2 00:00:00 MST 2009</div>
<div class="c" style="left:219px;top:853px;width:63px;word-spacing:-.5px;">Tue May 6 00:00:00 MST 2008</div>
<div class="c" style="left:219px;top:873px;width:63px;word-spacing:-.5px;">Tue May 6 00:00:00 MST 2008</div>
<div class="c" style="left:219px;top:893px;width:63px;word-spacing:-.5px;">Mon Mar 6 00:00:00 MST 2006</div>
<div class="c" style="left:219px;top:913px;width:63px;word-spacing:-.5px;">Sat Oct 3 00:00:00 MST 2009</div>
<div class="c" style="left:219px;top:933px;width:63px;word-spacing:-.5px;">Sun May 6 00:00:00 MST 2007</div>
<div class="c" style="left:219px;top:953px;width:63px;word-spacing:-.5px;">Sun May 6 00:00:00 MST 2007</div>
<div class="c r" style="left:283px;top:233px;width:63px;">175</div>
<div class="c r" style="left:283px;top:253px;width:63px;">350</div>
<div class="c r" style="left:283px;top:273px;width:63px;">375</div>
<div class="c r" style="left:283px;top:293px;width:63px;">325</div>
<div class="c r" style="left:283px;top:313px;width:63px;">200</div>
<div class="c r" style="left:283px;top:333px;width:63px;">175</div>
<div class="c r" style="left:283px;top:353px;width:63px;">425</div>
<div class="c r" style="left:283px;top:373px;width:63px;">650</div>
<div class="c r" style="left:283px;top:393px;width:63px;">650</div>
<div class="c r" style="left:283px;top:413px;width:63px;">1,500</div>
<div class="c r" style="left:283px;top:433px;width:63px;">2,000</div>
<div class="c r" style="left:283px;top:453px;width:63px;">250</div>
<div class="c r" style="left:283px;top:473px;width:63px;">550</div>
<div class="c r" style="left:283px;top:493px;width:63px;">0</div>
<div class="c r" style="left:283px;top:513px;width:63px;">700</div>
<div class="c r" style="left:283px;top:533px;width:63px;">450</div>
<div class="c r" style="left:283px;top:553px;width:63px;">250</div>
<div class="c r" style="left:283px;top:573px;width:63px;">200</div>
<div class="c r" style="left:283px;top:593px;width:63px;">225</div>
<div class="c r" style="left:283px;top:613px;width:63px;">517</div>
<div class="c r" style="left:283px;top:633px;width:63px;">0</div>
<div class="c r" style="left:283px;top:653px;width:63px;">400</div>
<div class="c r" style="left:283px;top:673px;width:63px;">500</div>
<div class="c r" style="left:283px;top:693px;width:63px;">569</div>
<div class="c r" style="left:283px;top:713px;width:63px;">695</div>
<div class="c r" style="left:283px;top:733px;width:63px;">250</div>
<div class="c r" style="left:283px;top:753px;width:63px;">383</div>
<div class="c r" style="left:283px;top:813px;width:63px;">3,900</div>
<div class="c r" style="left:283px;top:833px;width:63px;">3900</div>
<div class="c r" style="left:283px;top:853px;width:63px;">600</div>
<div class="c r" style="left:283px;top:873px;width:63px;">800</div>
<div class="c r" style="left:283px;top:893px;width:63px;">0</div>
<div class="c r" style="left:283px;top:913px;width:63px;">0</div>
<div class="c r" style="left:283px;top:933px;width:63px;">200</div>
<div class="c r" style="left:283px;top:953px;width:63px;">250</div>
<div class="c r" style="left:347px;top:233px;width:63px;">100</div>
<div class="c r" style="left:347px;top:253px;width:63px;">0</div>
<div class="c r" style="left:347px;top:273px;width:63px;">0</div>
<div class="c r" style="left:347px;top:293px;width:63px;">0</div>
<div class="c r" style="left:347px;top:333px;width:63px;">0</div>
<div class="c r" style="left:347px;top:353px;width:63px;">0</div>
<div class="c r" style="left:347px;top:373px;width:63px;">0</div>
<div class="c r" style="left:347px;top:393px;width:63px;">0</div>
<div class="c r" style="left:347px;top:413px;width:63px;">0</div>
<div class="c r" style="left:347px;top:433px;width:63px;">0</div>
<div class="c r" style="left:347px;top:453px;width:63px;">0</div>
<div class="c r" style="left:347px;top:473px;width:63px;">100</div>
<div class="c r" style="left:347px;top:513px;width:63px;">0</div>
<div class="c r" style="left:347px;top:533px;width:63px;">0</div>
<div class="c r" style="left:347px;top:553px;width:63px;">0</div>
<div class="c r" style="left:347px;top:573px;width:63px;">100</div>
<div class="c r" style="left:347px;top:593px;width:63px;">0</div>
<div class="c r" style="left:347px;top:613px;width:63px;">0</div>
<div class="c r" style="left:347px;top:633px;width:63px;">0</div>
<div class="c r" style="left:347px;top:673px;width:63px;">0</div>
<div class="c r" style="left:347px;top:693px;width:63px;">0</div>
<div class="c r" style="left:347px;top:713px;width:63px;">0</div>
<div class="c r" style="left:347px;top:733px;width:63px;">0</div>
<div class="c r" style="left:347px;top:753px;width:63px;">0</div>
<div class="c r" style="left:347px;top:833px;width:63px;">0</div>
<div class="c r" style="left:347px;top:853px;width:63px;">0</div>
<div class="c r" style="left:347px;top:873px;width:63px;">0</div>
<div class="c r" style="left:347px;top:893px;width:63px;">75</div>
<div class="c r" style="left:347px;top:913px;width:63px;">0</div>
<div class="c r" style="left:347px;top:933px;width:63px;">0</div>
<div class="c" style="left:347px;top:773px;width:127px;letter-spacing:.65px;">8 3/8",",null"</div>
<div class="c" style="left:347px;top:793px;width:127px;letter-spacing:.8px;">4",",null"</div>
<div class="c" style="left:411px;top:293px;width:63px;letter-spacing:.6px;">5",",", "</div>
<div class="c" style="left:411px;top:393px;width:63px;letter-spacing:.6px;">4",",", "</div>
<div class="c" style="left:411px;top:673px;width:63px;letter-spacing:.6px;">4",",", "</div>
<div class="c" style="left:411px;top:693px;width:63px;letter-spacing:.6px;">6",",", "</div>
<div class="c" style="left:411px;top:713px;width:63px;letter-spacing:.6px;">6",",", "</div>
<div class="c" style="left:411px;top:813px;width:63px;letter-spacing:.7px;">29",",null"</div>
<div class="c" style="left:475px;top:813px;width:142px;">8.5x25x50 Leupold MK4</div>
<div class="c" style="left:27px;top:693px;width:63px;">Apache Junction</div>
<div class="c" style="left:91px;top:693px;width:63px;">AZ</div>
<div class="c r" style="left:155px;top:693px;width:63px;">85220</div>
<div class="c" style="left:27px;top:773px;width:63px;">Mon May 3 00:00:00 MST 2010</div>
<div class="c r" style="left:91px;top:773px;width:63px;">0</div>
<div class="c" style="left:27px;top:793px;width:63px;">Tue May 2 00:00:00 MST 2006</div>
<div class="c r" style="left:91px;top:793px;width:63px;">0</div>
<div class="b" style="left:410px;top:232px;width:2px;height:741px;background:repeating-linear-gradient(180deg,#137040 0,#137040 7px,#fff 7px,#fff 9px);background-position:0 -1px"></div>
<div class="b" style="left:473px;top:232px;width:2px;height:741px;background:repeating-linear-gradient(180deg,#137040 0,#137040 7px,#fff 7px,#fff 9px);background-position:0 -1px"></div>
<div class="b" style="left:413px;top:232px;width:60px;height:2px;background:repeating-linear-gradient(90deg,#137040 0,#137040 7px,#fff 7px,#fff 9px)"></div>
<div class="b" style="left:621px;top:210px;width:15px;height:750px;background:#f3f3f3"></div>
<div class="b" style="left:621px;top:195px;width:15px;height:15px;border:1px solid #ababab;box-sizing:border-box;background:#fff"></div>
<svg class="b" style="left:625px;top:200px" width="8" height="4" viewBox="0 0 8 4"><path d="M0 4h8l-4-4z" fill="#777"/></svg>
<div class="b" style="left:621px;top:210px;width:15px;height:188px;border:1px solid #ababab;box-sizing:border-box;background:#fff"></div>
<div class="b" style="left:621px;top:959px;width:15px;height:15px;border:1px solid #ababab;box-sizing:border-box;background:#fff"></div>
<svg class="b" style="left:625px;top:965px" width="8" height="4" viewBox="0 0 8 4"><path d="M0 0h8l-4 4z" fill="#777"/></svg>
<div class="b" style="left:1px;top:973px;width:638px;height:28px;background:#f3f3f3"></div>
<div class="b" style="left:1px;top:972px;width:617px;height:1px;background:#ababab"></div>
<svg class="b" style="left:28px;top:983px" width="5" height="8" viewBox="0 0 5 8"><path d="M5 0v8l-5-4z" fill="#c6c6c6"/></svg>
<svg class="b" style="left:57px;top:983px" width="5" height="8" viewBox="0 0 5 8"><path d="M0 0v8l5-4z" fill="#c6c6c6"/></svg>
<div class="b" style="left:101px;top:973px;width:126px;height:25px;background:#fff;border-bottom:2px solid #217346;border-right:1px solid #ababab;border-left:1px solid #ababab;box-sizing:border-box"></div>
<span class="t" style="left:113.0px;top:977.39px;font-size:13.3px;color:#217346;transform:scaleX(0.9633);font-weight:bold;">MyGunDBExport</span>
<svg class="b" style="left:260px;top:978px" width="16" height="16" viewBox="0 0 16 16"><circle cx="8" cy="8" r="7" fill="none" stroke="#777" stroke-width="1.2"/><path d="M4.5 8h7M8 4.5v7" stroke="#777" stroke-width="1.6"/></svg>
<div class="b" style="left:384px;top:983px;width:2px;height:2px;background:#c0c0c0"></div>
<div class="b" style="left:384px;top:987px;width:2px;height:2px;background:#c0c0c0"></div>
<div class="b" style="left:384px;top:991px;width:2px;height:2px;background:#c0c0c0"></div>
<div class="b" style="left:401px;top:980px;width:217px;height:15px;background:#e8e8e8"></div>
<div class="b" style="left:401px;top:980px;width:15px;height:15px;border:1px solid #ababab;box-sizing:border-box;background:#fff"></div>
<svg class="b" style="left:406px;top:984px" width="4" height="8" viewBox="0 0 4 8"><path d="M4 0v7l-4-3.5z" fill="#777"/></svg>
<div class="b" style="left:603px;top:980px;width:15px;height:15px;border:1px solid #ababab;box-sizing:border-box;background:#fff"></div>
<svg class="b" style="left:609px;top:984px" width="4" height="8" viewBox="0 0 4 8"><path d="M0 0v7l4-3.5z" fill="#777"/></svg>
<div class="b" style="left:545px;top:980px;width:40px;height:15px;border:1px solid #ababab;box-sizing:border-box;background:#fff"></div>
<div class="b" style="left:1px;top:1001px;width:638px;height:21px;background:#217346"></div>
<span class="t" style="left:7.5px;top:1002.84px;font-size:12px;color:#fff;transform:scaleX(0.9304);">Select destination and press ENTER or choose Paste</span>
<div class="b" style="left:336px;top:1001px;width:38px;height:21px;background:#0e6537"></div>
<svg class="b" style="left:348px;top:1005px" width="13" height="13" viewBox="0 0 13 13"><path d="M0.5 0.5h12v12h-12zM0.5 4.5h12M0.5 8.5h12M4.5 0.5v12M8.5 0.5v12" stroke="#fff" fill="none" stroke-width="1.3"/></svg>
<svg class="b" style="left:386px;top:1005px" width="14" height="13" viewBox="0 0 14 13"><path d="M0.5 0.5h13v12h-13z" stroke="#fff" fill="none" stroke-width="1.2"/><path d="M3.5 2.5h7v8h-7z" stroke="#fff" fill="none"/><path d="M5 4.5h4M5 6.5h4M5 8.5h4" stroke="#fff"/></svg>
<svg class="b" style="left:424px;top:1005px" width="14" height="13" viewBox="0 0 14 13"><path d="M0.5 0.5h13v12h-13z" stroke="#fff" fill="none" stroke-width="1.2"/><path d="M1 1h3.5v6.500h-3.500zM5.500 1h3.500v6.500h-3.500z" fill="#fff" opacity=".9"/><path d="M1 8h8.500v-7" stroke="#fff" fill="none"/></svg>
<div class="b" style="left:455px;top:1011px;width:6px;height:2px;background:#fff"></div>
<div class="b" style="left:465px;top:1011px;width:101px;height:1px;background:#fff"></div>
<div class="b" style="left:513px;top:1006px;width:4px;height:11px;background:#fff"></div>
<div class="b" style="left:569px;top:1011px;width:8px;height:2px;background:#fff"></div>
<div class="b" style="left:572px;top:1008px;width:2px;height:8px;background:#fff"></div>
<span class="t" style="left:591.5px;top:1002.84px;font-size:12px;color:#fff;transform:scaleX(0.8797);">100%</span>
<div class="b" style="left:0px;top:0px;width:640px;height:1022px;border:1px solid #848484;border-right:0;box-sizing:border-box"></div>
<div class="b" style="left:635px;top:1px;width:4px;height:1021px;background:linear-gradient(90deg,rgba(0,0,0,0),rgba(0,0,0,.18))"></div>
<div class="b" style="left:639px;top:0px;width:1px;height:1022px;background:#6a6a6a"></div>
</div>
<div class="win" style="left:640px">
<svg class="b" style="left:0;top:0" width="640" height="53" viewBox="0 0 640 53"><defs><clipPath id="cpIn"><circle cx="492.5" cy="-6" r="48"/></clipPath></defs><rect x="181" y="1" width="3.5" height="16" fill="#e9e9e9"/><rect x="188.5" y="1" width="3.5" height="23" fill="#e9e9e9"/><rect x="195.5" y="1" width="3.5" height="16" fill="#e9e9e9"/><rect x="202.5" y="1" width="3.5" height="32" fill="#e9e9e9"/><rect x="210" y="1" width="3.7" height="20" fill="#e9e9e9"/><path d="M229 1h7v13z" fill="#e9e9e9"/><path d="M246.5 1h13v33.5c-8-2-13-12-13-33.5z" fill="#e9e9e9"/><path d="M270 1h14v34.5c-5 0-10-.3-14-2z" fill="#e9e9e9"/><rect x="290.0" y="1" width="2.8" height="35.8" fill="#e9e9e9"/><rect x="294.4" y="1" width="2.8" height="35.2" fill="#e9e9e9"/><rect x="298.8" y="1" width="2.8" height="34.3" fill="#e9e9e9"/><rect x="303.2" y="1" width="2.8" height="33.1" fill="#e9e9e9"/><rect x="307.6" y="1" width="2.8" height="31.4" fill="#e9e9e9"/><rect x="312.0" y="1" width="2.8" height="29.3" fill="#e9e9e9"/><rect x="316.4" y="1" width="2.8" height="26.8" fill="#e9e9e9"/><rect x="320.8" y="1" width="2.8" height="23.6" fill="#e9e9e9"/><rect x="325.2" y="1" width="2.8" height="19.8" fill="#e9e9e9"/><rect x="329.6" y="1" width="2.8" height="15.1" fill="#e9e9e9"/><path d="M338 1a13.5 12 0 0 0 27 0z" fill="#e9e9e9"/><circle cx="403.5" cy="23" r="17.2" fill="none" stroke="#e9e9e9" stroke-width="7.6"/><circle cx="403.5" cy="23" r="8.4" fill="#e9e9e9"/><circle cx="492.5" cy="-6" r="61" fill="#e9e9e9"/><g clip-path="url(#cpIn)"><path d="M481 0l60 60h80v-80h-140z" fill="#fff"/><path d="M453.5 7l60 60" stroke="#fff" stroke-width="2.5" stroke-linecap="round"/><path d="M456.2 2l60 60" stroke="#fff" stroke-width="2.5" stroke-linecap="round"/><path d="M461.8 0l60 60" stroke="#fff" stroke-width="2.5" stroke-linecap="round"/><path d="M469.5 0l60 60" stroke="#fff" stroke-width="2.5" stroke-linecap="round"/></g><path d="M564.5 6.5L575 -4" stroke="#e9e9e9" stroke-width="5.5"/><path d="M564 21.5L590 -4.5" stroke="#e9e9e9" stroke-width="5.5"/><path d="M579 22L606 -5" stroke="#e9e9e9" stroke-width="5.5"/><path d="M576 40L621 -5" stroke="#e9e9e9" stroke-width="5.5"/><path d="M589 41.5L640 -9.5" stroke="#e9e9e9" stroke-width="5.5"/><path d="M606 41L650 -3" stroke="#e9e9e9" stroke-width="5.5"/></svg>
<svg class="b" style="left:11px;top:7px" width="17" height="16" viewBox="0 0 17 16"><path d="M9.500 2.500h6.200v11h-6.200z" fill="#fff" stroke="#217346" stroke-width="1"/><path d="M10 4.700h5.500M10 6.900h5.500M10 9.100h5.500M10 11.300h5.500" stroke="#217346" stroke-width=".8"/><path d="M12.800 2.500v11" stroke="#217346" stroke-width=".7"/><path d="M0 1.800l10-1.800v16l-10-1.800z" fill="#217346"/><path d="M2.500 3.600l5 8.800M7.500 3.600l-5 8.800" stroke="#fff" stroke-width="1.600"/></svg>
<svg class="b" style="left:41px;top:8px" width="14" height="14" viewBox="0 0 14 14"><path d="M0 0h14v14h-14z" fill="#8a4baf"/><path d="M2.800 1h9v6h-9z" fill="#fff"/><path d="M2.800 9h8.200v4.200h-8.200z" fill="#fff"/><path d="M4.700 11h2.200v2.200h-2.200z" fill="#8a4baf"/></svg>
<svg class="b" style="left:70px;top:8px" width="15" height="14" viewBox="0 0 15 14"><path d="M3.500 4.400h5.700a4.300 4.300 0 0 1 0 8.600h-1.200" fill="none" stroke="#3b75b5" stroke-width="2.200"/><path d="M6.800 0.200l-6.400 4.200l7.400 4.400l-2.600-4.400z" fill="#3b75b5"/></svg>
<svg class="b" style="left:90px;top:13px" width="6" height="4" viewBox="0 0 6 4"><path d="M0 0h6l-3.0 3.0z" fill="#777"/></svg>
<svg class="b" style="left:110px;top:8px" width="15" height="14" viewBox="0 0 15 14"><path d="M11.500 4.400h-5.700a4.300 4.300 0 0 0 0 8.600h1.200" fill="none" stroke="#bdbdbd" stroke-width="2.200"/><path d="M8.200 0.200l6.400 4.200l-7.400 4.400l2.600-4.400z" fill="#bdbdbd"/></svg>
<svg class="b" style="left:130px;top:13px" width="6" height="4" viewBox="0 0 6 4"><path d="M0 0h6l-3.0 3.0z" fill="#c0c0c0"/></svg>
<svg class="b" style="left:149px;top:12px" width="6" height="7" viewBox="0 0 6 7"><path d="M0 1h6" stroke="#777" stroke-width="1"/><path d="M0 3.700h6l-3 3.200z" fill="#777"/></svg>
<span class="t" style="left:259.5px;top:5.50px;font-size:13px;color:#444;transform:scaleX(0.8492);">JEFirearms1.csv - Excel</span>
<span class="t" style="left:503.5px;top:5.15px;font-size:14px;color:#777;transform:scaleX(0.9355);font-weight:bold;">?</span>
<svg class="b" style="left:530px;top:10px" width="14" height="11" viewBox="0 0 14 11"><path d="M0.500 0.500h13v10h-13z" fill="none" stroke="#777"/><path d="M0.500 2.500h13" stroke="#777"/><path d="M7 9.500v-5M4.500 6.500l2.500-2.500l2.500 2.500" fill="none" stroke="#777" stroke-width="1.200"/></svg>
<div class="b" style="left:561px;top:15px;width:10px;height:3px;background:#777"></div>
<div class="b" style="left:590px;top:10px;width:11px;height:11px;border:1px solid #777;border-top-width:3px;box-sizing:border-box"></div>
<svg class="b" style="left:619px;top:10px" width="11" height="11" viewBox="0 0 11 11"><path d="M1 1l9 9M10 1l-9 9" stroke="#777" stroke-width="2.2" fill="none"/></svg>
<div class="b" style="left:1px;top:29px;width:59px;height:25px;background:#217346"></div>
<span class="t" style="left:20.0px;top:31.84px;font-size:12px;color:#fff;transform:scaleX(0.8287);">FILE</span>
<div class="b" style="left:59px;top:53px;width:581px;height:1px;background:#d4d4d4"></div>
<div class="b" style="left:64px;top:29px;width:44px;height:25px;background:#fff;border:1px solid #d4d4d4;border-bottom:0;box-sizing:border-box"></div>
<span class="t" style="left:68.0px;top:31.84px;font-size:12px;color:#217346;transform:scaleX(0.9722);">HOME</span>
<span class="t" style="left:113.0px;top:31.84px;font-size:12px;color:#444;transform:scaleX(0.8792);">INSERT</span>
<span class="t" style="left:162.0px;top:31.84px;font-size:12px;color:#444;transform:scaleX(0.8949);">PAGE L</span>
<span class="t" style="left:215.5px;top:31.84px;font-size:12px;color:#444;transform:scaleX(0.9320);">FORMU</span>
<span class="t" style="left:269.0px;top:31.84px;font-size:12px;color:#444;transform:scaleX(1.0423);">DATA</span>
<span class="t" style="left:310.5px;top:31.84px;font-size:12px;color:#444;transform:scaleX(0.8555);">REVIEW</span>
<span class="t" style="left:361.5px;top:31.84px;font-size:12px;color:#444;transform:scaleX(0.9130);">VIEW</span>
<span class="t" style="left:400.0px;top:31.84px;font-size:12px;color:#444;transform:scaleX(0.8750);">PDF</span>
<span class="t" style="left:430.5px;top:31.84px;font-size:12px;color:#444;transform:scaleX(0.9044);">POWER</span>
<span class="t" style="left:485.0px;top:31.84px;font-size:12px;color:#444;transform:scaleX(0.9600);">TEAM</span>
<div class="b" style="left:157px;top:30px;width:1px;height:23px;background:#e1e1e1"></div>
<div class="b" style="left:210px;top:30px;width:1px;height:23px;background:#e1e1e1"></div>
<div class="b" style="left:263px;top:30px;width:1px;height:23px;background:#e1e1e1"></div>
<div class="b" style="left:305px;top:30px;width:1px;height:23px;background:#e1e1e1"></div>
<div class="b" style="left:356px;top:30px;width:1px;height:23px;background:#e1e1e1"></div>
<div class="b" style="left:394px;top:30px;width:1px;height:23px;background:#e1e1e1"></div>
<div class="b" style="left:426px;top:30px;width:1px;height:23px;background:#e1e1e1"></div>
<div class="b" style="left:479px;top:30px;width:1px;height:23px;background:#e1e1e1"></div>
<div class="b" style="left:522px;top:30px;width:1px;height:23px;background:#e1e1e1"></div>
<span class="t" style="left:531.5px;top:31.84px;font-size:12px;color:#444;transform:scaleX(0.9820);">Clay Pryor</span>
<svg class="b" style="left:594px;top:40px" width="6" height="4" viewBox="0 0 6 4"><path d="M0 0h6l-3.0 3.0z" fill="#777"/></svg>
<svg class="b" style="left:605px;top:29px" width="24" height="25" viewBox="0 0 24 25"><path d="M0 0h24v25h-24z" fill="#b1b1b1"/><ellipse cx="11.500" cy="8.500" rx="4.800" ry="5.800" fill="#fff"/><path d="M2.500 25v-5c0-4 3-6 5-6.500c2.500 1.800 5.500 1.800 8 0c2 .5 5 2.500 5 6.500v5z" fill="#fff"/></svg>
<svg class="b" style="left:14px;top:62px" width="29" height="31" viewBox="0 0 29 31"><rect x="0" y="3" width="24" height="24.500" rx="1.500" fill="#eac282"/><path d="M5 2.500h4a3 3 0 0 1 6 0h4v4h-14z" fill="#777"/><circle cx="12" cy="2.300" r="1.100" fill="#fff"/><path d="M14.500 11.500h8.500l4.500 4.500v13.500h-13z" fill="#fff" stroke="#777"/><path d="M23 11.500v4.500h4.500" fill="none" stroke="#777"/></svg>
<span class="t" style="left:12.0px;top:92.84px;font-size:12px;color:#444;transform:scaleX(0.9288);">Paste</span>
<svg class="b" style="left:23px;top:117px" width="6" height="4" viewBox="0 0 6 4"><path d="M0 0h6l-3.0 3.0z" fill="#777"/></svg>
<svg class="b" style="left:51px;top:60px" width="15" height="16" viewBox="0 0 15 16"><path d="M3.500 0.500l6.500 10.500M11.500 0.500l-6.500 10.500" stroke="#666" stroke-width="1.600" fill="none"/><circle cx="3.300" cy="12.500" r="2.400" fill="none" stroke="#3b75b5" stroke-width="1.200"/><circle cx="11.700" cy="12.500" r="2.400" fill="none" stroke="#3b75b5" stroke-width="1.200"/></svg>
<svg class="b" style="left:50px;top:84px" width="16" height="15" viewBox="0 0 16 15"><path d="M0.500 0.500h6l2.500 2.500v8h-8.500z" fill="#fff" stroke="#777"/><path d="M2 4h4M2 6h4M2 8h3" stroke="#3b75b5"/><path d="M6.500 4.500h6l2.500 2.500v7.500h-8.500z" fill="#fff" stroke="#777"/><path d="M8.500 8.500h5M8.500 10.500h5M8.500 12.500h5" stroke="#3b75b5"/></svg>
<svg class="b" style="left:72px;top:90px" width="6" height="4" viewBox="0 0 6 4"><path d="M0 0h6l-3.0 3.0z" fill="#777"/></svg>
<svg class="b" style="left:50px;top:107px" width="17" height="15" viewBox="0 0 17 15"><path d="M0.500 7l5-3.500l4 5.500l-3.500 5.500z" fill="#eac282"/><path d="M6 3.500l4.500-3l4 5.500l-4.500 3z" fill="#777" transform="translate(0.500 0.500)"/><path d="M11.500 2.500l3.500-2.500l1.800 2.500l-3.500 2.500z" fill="#777"/></svg>
<span class="t" style="left:10.0px;top:127.84px;font-size:12px;color:#666;transform:scaleX(0.9929);">Clipboard</span>
<svg class="b" style="left:75px;top:135px" width="7" height="7" viewBox="0 0 7 7"><path d="M0.500 4v-3.500h3.500" fill="none" stroke="#777"/><path d="M2.500 2.500l3 3" stroke="#777"/><path d="M7 3v4h-4z" fill="#777"/></svg>
<div class="b" style="left:86px;top:58px;width:1px;height:85px;background:#e1e1e1"></div>
<div class="b" style="left:91px;top:57px;width:88px;height:23px;border:1px solid #ababab;box-sizing:border-box;background:#fff"></div>
<div class="b" style="left:179px;top:57px;width:43px;height:23px;border:1px solid #ababab;box-sizing:border-box;background:#fff"></div>
<span class="t" style="left:94.0px;top:59.39px;font-size:13.3px;color:#1e1e1e;transform:scaleX(0.9153);">Calibri</span>
<svg class="b" style="left:169px;top:67px" width="6" height="4" viewBox="0 0 6 4"><path d="M0 0h6l-3.0 3.0z" fill="#777"/></svg>
<span class="t" style="left:182.0px;top:59.39px;font-size:13.3px;color:#1e1e1e;transform:scaleX(0.8329);">11</span>
<svg class="b" style="left:212px;top:67px" width="6" height="4" viewBox="0 0 6 4"><path d="M0 0h6l-3.0 3.0z" fill="#777"/></svg>
<span class="t" style="left:97.0px;top:81.17px;font-size:12.5px;color:#444;transform:scaleX(0.8862);font-weight:bold;">B</span>
<span class="t" style="left:120px;top:80px;font-size:13.5px;color:#444;font-style:italic;font-family:'Liberation Serif',serif;transform:scaleX(1.25)">I</span>
<span class="t" style="left:141.0px;top:81.17px;font-size:12.5px;color:#444;transform:scaleX(0.9970);font-weight:bold;">U</span>
<div class="b" style="left:141px;top:96px;width:9px;height:1px;background:#444"></div>
<svg class="b" style="left:160px;top:90px" width="6" height="4" viewBox="0 0 6 4"><path d="M0 0h6l-3.0 3.0z" fill="#777"/></svg>
<div class="b" style="left:173px;top:80px;width:1px;height:22px;background:#e1e1e1"></div>
<span class="t" style="left:184.0px;top:82.50px;font-size:13px;color:#555;transform:scaleX(1.2109);">A</span>
<svg class="b" style="left:192px;top:84px" width="6" height="3" viewBox="0 0 6 3"><path d="M0 3h6l-3-3z" fill="#3b75b5"/></svg>
<span class="t" style="left:206.8px;top:83.71px;font-size:9.5px;color:#555;transform:scaleX(1.3730);">A</span>
<svg class="b" style="left:214px;top:84px" width="6" height="3" viewBox="0 0 6 3"><path d="M0 0h6l-3 3z" fill="#3b75b5"/></svg>
<svg class="b" style="left:95px;top:107px" width="14" height="14" viewBox="0 0 14 14"><g shape-rendering="crispEdges"><path d="M0 0.500h13M0 6.500h13M0.500 0v12M6.500 0v12M12.500 0v12" stroke="#777" stroke-dasharray="1 1" fill="none"/><path d="M0 12.500h13" stroke="#555" stroke-width="1"/></g></svg>
<svg class="b" style="left:116px;top:113px" width="6" height="4" viewBox="0 0 6 4"><path d="M0 0h6l-3.0 3.0z" fill="#777"/></svg>
<div class="b" style="left:129px;top:103px;width:1px;height:22px;background:#e1e1e1"></div>
<svg class="b" style="left:137px;top:105px" width="18" height="18" viewBox="0 0 18 18"><path d="M4 8l5.500-5.500l5 5l-5.500 5.500z" fill="#fff" stroke="#555" stroke-width="1.100"/><path d="M7.200 5.500v-3.500a1.500 1.500 0 0 1 3 0v1.500" fill="none" stroke="#555"/><path d="M14 6c2 1 2.500 3 1.500 5c-.3-1.500-1-2.500-2.500-3z" fill="#3b75b5"/><path d="M0 13h16v4h-16z" fill="#ffff00"/></svg>
<svg class="b" style="left:159px;top:113px" width="6" height="4" viewBox="0 0 6 4"><path d="M0 0h6l-3.0 3.0z" fill="#777"/></svg>
<span class="t" style="left:174.5px;top:103.65px;font-size:14px;color:#555;transform:scaleX(1.1030);">A</span>
<div class="b" style="left:171px;top:118px;width:16px;height:4px;background:#ff0000"></div>
<svg class="b" style="left:193px;top:113px" width="6" height="4" viewBox="0 0 6 4"><path d="M0 0h6l-3.0 3.0z" fill="#777"/></svg>
<span class="t" style="left:136.5px;top:127.84px;font-size:12px;color:#666;transform:scaleX(0.9995);">Font</span>
<svg class="b" style="left:215px;top:135px" width="7" height="7" viewBox="0 0 7 7"><path d="M0.500 4v-3.500h3.500" fill="none" stroke="#777"/><path d="M2.500 2.500l3 3" stroke="#777"/><path d="M7 3v4h-4z" fill="#777"/></svg>
<div class="b" style="left:226px;top:58px;width:1px;height:85px;background:#e1e1e1"></div>
<div class="b" style="left:242px;top:58px;width:30px;height:30px;border:1px solid #d0d0d0;box-sizing:border-box;background:#fff"></div>
<svg class="b" style="left:251px;top:67px" width="15" height="12" viewBox="0 0 15 12"><path d="M0 1.500h15M2 4.500h11M0 7.500h15M2 10.500h11" stroke="#777" stroke-width="1"/></svg>
<span class="t" style="left:230.0px;top:90.84px;font-size:12px;color:#444;transform:scaleX(1.0588);">Alignment</span>
<svg class="b" style="left:256px;top:115px" width="6" height="4" viewBox="0 0 6 4"><path d="M0 0h6l-3.0 3.0z" fill="#777"/></svg>
<div class="b" style="left:289px;top:58px;width:1px;height:85px;background:#e1e1e1"></div>
<div class="b" style="left:299px;top:58px;width:30px;height:30px;border:1px solid #d0d0d0;box-sizing:border-box;background:#fff"></div>
<span class="t" style="left:308.5px;top:63.98px;font-size:14.5px;color:#555;transform:scaleX(1.0083);">%</span>
<span class="t" style="left:293.5px;top:90.84px;font-size:12px;color:#444;transform:scaleX(1.0309);">Number</span>
<svg class="b" style="left:313px;top:115px" width="6" height="4" viewBox="0 0 6 4"><path d="M0 0h6l-3.0 3.0z" fill="#777"/></svg>
<div class="b" style="left:340px;top:58px;width:1px;height:85px;background:#e1e1e1"></div>
<svg class="b" style="left:348px;top:60px" width="17" height="17" viewBox="0 0 17 17"><path d="M0.500 0.500h12.500v12h-12.500z" fill="#fff" stroke="#777"/><path d="M0.500 4.500h12.500M0.500 8.500h12.500M8.500 0.500v12" stroke="#999" fill="none"/><path d="M1 1h6v3h-6z" fill="#d85a30"/><path d="M1 5h8v3h-8z" fill="#3b75b5"/><path d="M1 9h4v3h-4z" fill="#d85a30"/><path d="M6.500 7.500h9v8h-9z" fill="#fff" stroke="#555"/><path d="M8.500 10.500h5M8.500 12.800h5M12.200 9l-2.400 5" stroke="#444" stroke-width=".9"/></svg>
<span class="t" style="left:366.7px;top:58.84px;font-size:12px;color:#444;transform:scaleX(1.0296);">Conditional Formatting</span>
<svg class="b" style="left:494px;top:67px" width="6" height="4" viewBox="0 0 6 4"><path d="M0 0h6l-3.0 3.0z" fill="#777"/></svg>
<svg class="b" style="left:348px;top:83px" width="18" height="17" viewBox="0 0 18 17"><path d="M0.500 0.500h15v12h-15z" fill="#fff" stroke="#777"/><path d="M0.500 4h15M0.500 8h15M4 0.500v12M8 0.500v12M11.500 0.500v12" stroke="#999" fill="none"/><path d="M4.500 4.500h7v7.500h-7z" fill="#bdd7ee"/><path d="M4.500 8h7M8 4.500v7.500" stroke="#9dbbd8" stroke-width=".6"/><path d="M15.800 4.200l.400 3.300l-3.900 4.200l-1.700-1.800z" fill="#6a6a6a"/><path d="M12.700 10.300c-1.500-1.300-4.300-.700-5.700 1.500c-.800 1.400-1.600 2.500-3.300 3.500c3 .900 6.600.300 8.300-1.600c1.200-1.300 1.400-2.600.700-3.400z" fill="#3b75b5"/><circle cx="10.400" cy="12" r=".800" fill="#fff"/></svg>
<span class="t" style="left:366.7px;top:81.84px;font-size:12px;color:#444;transform:scaleX(0.9882);">Format as Table</span>
<svg class="b" style="left:454px;top:90px" width="6" height="4" viewBox="0 0 6 4"><path d="M0 0h6l-3.0 3.0z" fill="#777"/></svg>
<svg class="b" style="left:348px;top:106px" width="18" height="17" viewBox="0 0 18 17"><path d="M0.500 0.500h15v12h-15z" fill="#fff" stroke="#777"/><path d="M0.500 3.500h15M0.500 9.500h4M4 0.500v12M11.500 0.500v3" stroke="#999" fill="none"/><path d="M4.500 4h7.500v8h-7.500z" fill="#bdd7ee"/><path d="M15.800 4.200l.400 3.300l-3.900 4.200l-1.700-1.800z" fill="#6a6a6a"/><path d="M12.700 10.300c-1.500-1.300-4.300-.700-5.700 1.500c-.800 1.400-1.600 2.500-3.300 3.500c3 .900 6.600.300 8.300-1.600c1.200-1.300 1.400-2.600.700-3.400z" fill="#3b75b5"/><circle cx="10.400" cy="12" r=".800" fill="#fff"/></svg>
<span class="t" style="left:366.7px;top:104.84px;font-size:12px;color:#444;transform:scaleX(0.9403);">Cell Styles</span>
<svg class="b" style="left:423px;top:113px" width="6" height="4" viewBox="0 0 6 4"><path d="M0 0h6l-3.0 3.0z" fill="#777"/></svg>
<span class="t" style="left:411.0px;top:127.84px;font-size:12px;color:#666;transform:scaleX(0.8721);">Styles</span>
<div class="b" style="left:510px;top:58px;width:1px;height:85px;background:#e1e1e1"></div>
<div class="b" style="left:517px;top:58px;width:30px;height:30px;border:1px solid #d0d0d0;box-sizing:border-box;background:#fff"></div>
<svg class="b" style="left:524px;top:63px" width="17" height="17" viewBox="0 0 17 17"><path d="M1.500 1v4M14.500 1v4" stroke="#3b75b5" stroke-width="1"/><path d="M3 3h10" stroke="#3b75b5" stroke-width="1"/><path d="M3 3l2-2v4zM13 3l-2-2v4z" fill="#3b75b5"/><path d="M1.500 6.500h14v8h-14z" fill="#fff" stroke="#777"/><path d="M1.500 9.500h14M1.500 12h14M5 6.500v8M9 6.500v8M12.500 6.500v8" stroke="#aaa" fill="none"/><path d="M5 8.500h4v3.500h-4z" fill="#3b75b5"/><path d="M2 15.500c3 1.500 4.500 0 6.500 0s4 1.500 6.500 0" stroke="#777" fill="none"/></svg>
<span class="t" style="left:520.0px;top:90.84px;font-size:12px;color:#444;transform:scaleX(0.9561);">Cells</span>
<svg class="b" style="left:530px;top:115px" width="6" height="4" viewBox="0 0 6 4"><path d="M0 0h6l-3.0 3.0z" fill="#777"/></svg>
<div class="b" style="left:554px;top:58px;width:1px;height:85px;background:#e1e1e1"></div>
<div class="b" style="left:561px;top:58px;width:30px;height:30px;border:1px solid #d0d0d0;box-sizing:border-box;background:#fff"></div>
<svg class="b" style="left:568px;top:65px" width="17" height="15" viewBox="0 0 17 15"><path d="M3 2.500h3v-1.500h1.500v1.500l1 2v9.500h-6.500v-6z" fill="#666" transform="translate(-1 0)"/><path d="M9.500 4.500l1-2v-1.500h1.500v1.500h2l1.500 5.500v6h-6z" fill="#666"/><path d="M7 6h3v4h-3z" fill="#666"/><path d="M2 9.500h1.500v4h-1.500zM13 9.500h1.500v4h-1.500z" fill="#fff"/></svg>
<span class="t" style="left:558.5px;top:90.84px;font-size:12px;color:#444;transform:scaleX(0.9948);">Editing</span>
<svg class="b" style="left:574px;top:115px" width="6" height="4" viewBox="0 0 6 4"><path d="M0 0h6l-3.0 3.0z" fill="#777"/></svg>
<div class="b" style="left:598px;top:58px;width:1px;height:85px;background:#e1e1e1"></div>
<svg class="b" style="left:620px;top:135px" width="10" height="7" viewBox="0 0 10 7"><path d="M1 6l4-4.200l4 4.200" fill="none" stroke="#666" stroke-width="1.800"/></svg>
<div class="b" style="left:1px;top:146px;width:638px;height:1px;background:#d4d4d4"></div>
<div class="b" style="left:6px;top:157px;width:102px;height:26px;border:1px solid #c6c6c6;box-sizing:border-box;background:#fff"></div>
<span class="t" style="left:12.5px;top:161.39px;font-size:13.3px;color:#444;transform:scaleX(0.9221);">X2</span>
<svg class="b" style="left:94px;top:167px" width="8" height="5" viewBox="0 0 8 5"><path d="M0 0h8l-4 4.5z" fill="#777"/></svg>
<div class="b" style="left:122px;top:165px;width:2px;height:2px;background:#a6a6a6"></div>
<div class="b" style="left:122px;top:169px;width:2px;height:2px;background:#a6a6a6"></div>
<div class="b" style="left:122px;top:173px;width:2px;height:2px;background:#a6a6a6"></div>
<div class="b" style="left:138px;top:157px;width:110px;height:26px;border:1px solid #c6c6c6;box-sizing:border-box;background:#fff"></div>
<svg class="b" style="left:151px;top:165px" width="12" height="11" viewBox="0 0 12 11"><path d="M1 1l10 9M11 1l-10 9" stroke="#c6c6c6" stroke-width="2" fill="none"/></svg>
<svg class="b" style="left:187px;top:165px" width="14" height="11" viewBox="0 0 14 11"><path d="M1 6l4 4l8-9" stroke="#c6c6c6" stroke-width="2.4" fill="none"/></svg>
<span class="t" style="left:222.5px;top:160.15px;font-size:14px;color:#555;transform:scaleX(1.5014);font-weight:bold;font-style:italic;font-family:'Liberation Serif',serif;">f</span>
<span class="t" style="left:229.0px;top:162.71px;font-size:9.5px;color:#555;transform:scaleX(1.2302);font-weight:bold;font-style:italic;font-family:'Liberation Serif',serif;">x</span>
<div class="b" style="left:251px;top:157px;width:383px;height:26px;border:1px solid #c6c6c6;box-sizing:border-box;background:#fff"></div>
<svg class="b" style="left:625px;top:167px" width="8" height="6" viewBox="0 0 8 6"><path d="M0.7 0.7l3.3 3.6l3.3-3.6" stroke="#666" stroke-width="1.6" fill="none"/></svg>
<div class="b" style="left:1px;top:213px;width:616px;height:760px;background:repeating-linear-gradient(180deg,#fff 0,#fff 19px,#d4d4d4 19px,#d4d4d4 20px)"></div>
<div class="b" style="left:1px;top:233px;width:24px;height:740px;background:repeating-linear-gradient(180deg,#e1e1e1 0,#e1e1e1 19px,#ababab 19px,#ababab 20px)"></div>
<div class="b" style="left:90px;top:193px;width:1px;height:19px;background:#dcdcdc"></div>
<div class="b" style="left:90px;top:213px;width:1px;height:759px;background:#d4d4d4"></div>
<div class="b" style="left:154px;top:193px;width:1px;height:19px;background:#dcdcdc"></div>
<div class="b" style="left:154px;top:213px;width:1px;height:759px;background:#d4d4d4"></div>
<div class="b" style="left:272px;top:193px;width:1px;height:19px;background:#dcdcdc"></div>
<div class="b" style="left:272px;top:213px;width:1px;height:759px;background:#d4d4d4"></div>
<div class="b" style="left:362px;top:193px;width:1px;height:19px;background:#dcdcdc"></div>
<div class="b" style="left:362px;top:213px;width:1px;height:759px;background:#d4d4d4"></div>
<div class="b" style="left:472px;top:193px;width:1px;height:19px;background:#dcdcdc"></div>
<div class="b" style="left:472px;top:213px;width:1px;height:759px;background:#d4d4d4"></div>
<div class="b" style="left:536px;top:193px;width:1px;height:19px;background:#dcdcdc"></div>
<div class="b" style="left:536px;top:213px;width:1px;height:759px;background:#d4d4d4"></div>
<div class="b" style="left:600px;top:193px;width:1px;height:19px;background:#dcdcdc"></div>
<div class="b" style="left:600px;top:213px;width:1px;height:759px;background:#d4d4d4"></div>
<div class="b" style="left:1px;top:212px;width:25px;height:1px;background:#d4d4d4"></div>
<div class="b" style="left:26px;top:212px;width:591px;height:1px;background:#ababab"></div>
<div class="b" style="left:26px;top:193px;width:1px;height:19px;background:#cfcfcf"></div>
<div class="b" style="left:26px;top:212px;width:1px;height:761px;background:#ababab"></div>
<div class="b" style="left:617px;top:212px;width:1px;height:761px;background:#ababab"></div>
<svg class="b" style="left:11px;top:198px" width="13" height="11" viewBox="0 0 13 11"><path d="M12.500 0v10.500h-12.500z" fill="#dcdcdc"/></svg>
<div class="ch" style="left:27px;width:63px">U</div>
<div class="ch" style="left:91px;width:63px">V</div>
<div class="ch" style="left:155px;width:117px">W</div>
<div class="b" style="left:273px;top:193px;width:89px;height:18px;background:#e1e1e1"></div>
<div class="b" style="left:273px;top:211px;width:89px;height:2px;background:#217346"></div>
<div class="ch" style="left:275px;width:89px;color:#217346;font-weight:bold">X</div>
<div class="ch" style="left:363px;width:109px">Y</div>
<div class="ch" style="left:473px;width:63px">Z</div>
<div class="ch" style="left:537px;width:63px">AA</div>
<div class="rh" style="top:213px;">1</div>
<div class="rh" style="top:233px;color:#217346;font-weight:bold;">2</div>
<div class="rh" style="top:253px;color:#217346;font-weight:bold;">3</div>
<div class="rh" style="top:273px;color:#217346;font-weight:bold;">4</div>
<div class="rh" style="top:293px;color:#217346;font-weight:bold;">5</div>
<div class="rh" style="top:313px;color:#217346;font-weight:bold;">6</div>
<div class="rh" style="top:333px;color:#217346;font-weight:bold;">7</div>
<div class="rh" style="top:353px;color:#217346;font-weight:bold;">8</div>
<div class="rh" style="top:373px;color:#217346;font-weight:bold;">9</div>
<div class="rh" style="top:393px;color:#217346;font-weight:bold;">10</div>
<div class="rh" style="top:413px;color:#217346;font-weight:bold;">11</div>
<div class="rh" style="top:433px;color:#217346;font-weight:bold;">12</div>
<div class="rh" style="top:453px;color:#217346;font-weight:bold;">13</div>
<div class="rh" style="top:473px;color:#217346;font-weight:bold;">14</div>
<div class="rh" style="top:493px;color:#217346;font-weight:bold;">15</div>
<div class="rh" style="top:513px;color:#217346;font-weight:bold;">16</div>
<div class="rh" style="top:533px;color:#217346;font-weight:bold;">17</div>
<div class="rh" style="top:553px;color:#217346;font-weight:bold;">18</div>
<div class="rh" style="top:573px;color:#217346;font-weight:bold;">19</div>
<div class="rh" style="top:593px;color:#217346;font-weight:bold;">20</div>
<div class="rh" style="top:613px;color:#217346;font-weight:bold;">21</div>
<div class="rh" style="top:633px;color:#217346;font-weight:bold;">22</div>
<div class="rh" style="top:653px;color:#217346;font-weight:bold;">23</div>
<div class="rh" style="top:673px;color:#217346;font-weight:bold;">24</div>
<div class="rh" style="top:693px;color:#217346;font-weight:bold;">25</div>
<div class="rh" style="top:713px;color:#217346;font-weight:bold;">26</div>
<div class="rh" style="top:733px;color:#217346;font-weight:bold;">27</div>
<div class="rh" style="top:753px;color:#217346;font-weight:bold;">28</div>
<div class="rh" style="top:773px;color:#217346;font-weight:bold;">29</div>
<div class="rh" style="top:793px;color:#217346;font-weight:bold;">30</div>
<div class="rh" style="top:813px;color:#217346;font-weight:bold;">31</div>
<div class="rh" style="top:833px;color:#217346;font-weight:bold;">32</div>
<div class="rh" style="top:853px;color:#217346;font-weight:bold;">33</div>
<div class="rh" style="top:873px;color:#217346;font-weight:bold;">34</div>
<div class="rh" style="top:893px;color:#217346;font-weight:bold;">35</div>
<div class="rh" style="top:913px;color:#217346;font-weight:bold;">36</div>
<div class="rh" style="top:933px;color:#217346;font-weight:bold;">37</div>
<div class="rh" style="top:953px;color:#217346;font-weight:bold;">38</div>
<div class="b" style="left:25px;top:233px;width:2px;height:740px;background:#217346"></div>
<div class="b" style="left:275px;top:253px;width:86px;height:720px;background:repeating-linear-gradient(180deg,#c6c6c6 0,#c6c6c6 19px,#aaa 19px,#aaa 20px)"></div>
<div class="b" style="left:272px;top:231px;width:92px;height:745px;border:2px solid #217346;box-sizing:border-box;box-shadow:inset 0 0 0 1px #fff"></div>
<div class="c" style="left:27px;top:213px;width:63px;">C&amp;R?</div>
<div class="c" style="left:91px;top:213px;width:63px;">Bluing</div>
<div class="c" style="left:155px;top:213px;width:117px;">Stock or Grip Type</div>
<div class="c" style="left:273px;top:213px;width:89px;padding-left:2.5px;letter-spacing:.1px;">Barrel Length</div>
<div class="c" style="left:363px;top:213px;width:109px;">Storage Location</div>
<div class="c" style="left:473px;top:213px;width:63px;">Sights</div>
<div class="c" style="left:537px;top:213px;width:63px;">Appraised Value</div>
<div class="c" style="left:601px;top:213px;width:16px;">Market Value</div>
<div class="c r" style="left:91px;top:233px;width:63px;">100</div>
<div class="c r" style="left:91px;top:253px;width:63px;">0</div>
<div class="c r" style="left:91px;top:273px;width:63px;">0</div>
<div class="c r" style="left:91px;top:293px;width:63px;">0</div>
<div class="c r" style="left:91px;top:333px;width:63px;">0</div>
<div class="c r" style="left:91px;top:353px;width:63px;">0</div>
<div class="c r" style="left:91px;top:373px;width:63px;">0</div>
<div class="c r" style="left:91px;top:393px;width:63px;">0</div>
<div class="c r" style="left:91px;top:413px;width:63px;">0</div>
<div class="c r" style="left:91px;top:433px;width:63px;">0</div>
<div class="c r" style="left:91px;top:453px;width:63px;">0</div>
<div class="c r" style="left:91px;top:473px;width:63px;">100</div>
<div class="c r" style="left:91px;top:513px;width:63px;">0</div>
<div class="c r" style="left:91px;top:533px;width:63px;">0</div>
<div class="c r" style="left:91px;top:553px;width:63px;">0</div>
<div class="c r" style="left:91px;top:573px;width:63px;">100</div>
<div class="c r" style="left:91px;top:593px;width:63px;">0</div>
<div class="c r" style="left:91px;top:613px;width:63px;">0</div>
<div class="c r" style="left:91px;top:633px;width:63px;">0</div>
<div class="c r" style="left:91px;top:673px;width:63px;">0</div>
<div class="c r" style="left:91px;top:693px;width:63px;">0</div>
<div class="c r" style="left:91px;top:713px;width:63px;">0</div>
<div class="c r" style="left:91px;top:733px;width:63px;">0</div>
<div class="c r" style="left:91px;top:753px;width:63px;">0</div>
<div class="c r" style="left:91px;top:833px;width:63px;">0</div>
<div class="c r" style="left:91px;top:853px;width:63px;">0</div>
<div class="c r" style="left:91px;top:873px;width:63px;">0</div>
<div class="c r" style="left:91px;top:893px;width:63px;">75</div>
<div class="c r" style="left:91px;top:913px;width:63px;">0</div>
<div class="c r" style="left:91px;top:933px;width:63px;">0</div>
<div class="c" style="left:91px;top:773px;width:180px;letter-spacing:.65px;">8 3/8",",null"</div>
<div class="c" style="left:91px;top:793px;width:180px;letter-spacing:.8px;">4",",null"</div>
<div class="c" style="left:27px;top:873px;width:63px;">Yes</div>
<div class="c" style="left:273px;top:293px;width:89px;padding-left:3px;letter-spacing:.6px;">5",",", "</div>
<div class="c" style="left:273px;top:393px;width:89px;padding-left:3px;letter-spacing:.6px;">4",",", "</div>
<div class="c" style="left:273px;top:673px;width:89px;padding-left:3px;letter-spacing:.6px;">4",",", "</div>
<div class="c" style="left:273px;top:693px;width:89px;padding-left:3px;letter-spacing:.6px;">6",",", "</div>
<div class="c" style="left:273px;top:713px;width:89px;padding-left:3px;letter-spacing:.6px;">6",",", "</div>
<div class="c" style="left:273px;top:813px;width:89px;padding-left:3px;letter-spacing:.7px;">29",",null"</div>
<div class="c" style="left:363px;top:233px;width:109px;">Home Safe</div>
<div class="c" style="left:363px;top:253px;width:109px;">Home Safe</div>
<div class="c" style="left:363px;top:273px;width:109px;">Home Safe</div>
<div class="c" style="left:363px;top:293px;width:109px;">Home Safe</div>
<div class="c" style="left:363px;top:313px;width:109px;">Work</div>
<div class="c" style="left:363px;top:333px;width:109px;">Store</div>
<div class="c" style="left:363px;top:353px;width:109px;">Home Safe</div>
<div class="c" style="left:363px;top:373px;width:109px;">Store</div>
<div class="c" style="left:363px;top:393px;width:109px;">Home Safe</div>
<div class="c" style="left:363px;top:413px;width:109px;">Home Safe</div>
<div class="c" style="left:363px;top:433px;width:109px;">Home Safe</div>
<div class="c" style="left:363px;top:453px;width:109px;">Home Safe</div>
<div class="c" style="left:363px;top:473px;width:109px;">Home Safe</div>
<div class="c" style="left:363px;top:493px;width:109px;">Work</div>
<div class="c" style="left:363px;top:513px;width:109px;">Home Safe</div>
<div class="c" style="left:363px;top:533px;width:109px;">Home Safe</div>
<div class="c" style="left:363px;top:553px;width:109px;">Home Safe</div>
<div class="c" style="left:363px;top:573px;width:109px;">Home Safe</div>
<div class="c" style="left:363px;top:593px;width:109px;">Home Safe</div>
<div class="c" style="left:363px;top:613px;width:109px;">Home Safe</div>
<div class="c" style="left:363px;top:633px;width:109px;">Home Safe</div>
<div class="c" style="left:363px;top:653px;width:109px;">Work</div>
<div class="c" style="left:363px;top:673px;width:109px;">Home Safe</div>
<div class="c" style="left:363px;top:693px;width:109px;">Home Safe</div>
<div class="c" style="left:363px;top:713px;width:109px;">Home Safe</div>
<div class="c" style="left:363px;top:733px;width:109px;">Home Safe</div>
<div class="c" style="left:363px;top:753px;width:109px;">Home Safe</div>
<div class="c" style="left:363px;top:773px;width:109px;letter-spacing:.8px;">null</div>
<div class="c" style="left:363px;top:793px;width:109px;letter-spacing:.8px;">null</div>
<div class="c" style="left:363px;top:813px;width:109px;">Work</div>
<div class="c" style="left:363px;top:833px;width:109px;">Store</div>
<div class="c" style="left:363px;top:853px;width:109px;">Home Safe</div>
<div class="c" style="left:363px;top:873px;width:109px;">Home Safe</div>
<div class="c" style="left:363px;top:893px;width:109px;">Home Safe</div>
<div class="c" style="left:363px;top:913px;width:109px;">Home Safe</div>
<div class="c" style="left:363px;top:933px;width:109px;">Home Safe</div>
<div class="c" style="left:363px;top:953px;width:109px;">Home Safe</div>
<div class="c" style="left:601px;top:713px;width:16px;">1911</div>
<div class="c" style="left:601px;top:773px;width:16px;">S&amp;W</div>
<div class="c" style="left:601px;top:793px;width:16px;">S&amp;W</div>
<div class="b" style="left:366px;top:951px;width:61px;height:22px;background:#fff;border:1px solid #c6c6c6;box-sizing:border-box;box-shadow:1px 1px 1px rgba(0,0,0,.15)"></div>
<svg class="b" style="left:369px;top:953px" width="16" height="17" viewBox="0 0 16 17"><path d="M1 3.500h11v12h-11z" fill="#f7d774" stroke="#caa64a" stroke-dasharray="1 1"/><path d="M4 1.500h5v3h-5z" fill="#999"/><path d="M5.500 7.500h9v8.500h-9z" fill="#fff" stroke="#777"/><path d="M7.500 10.500h5M7.500 13h5" stroke="#777"/></svg>
<span class="t" style="left:388.0px;top:953.84px;font-size:12px;color:#555;transform:scaleX(0.9942);">(Ctrl)</span>
<svg class="b" style="left:418px;top:961px" width="6" height="4" viewBox="0 0 6 4"><path d="M0 0h6l-3.0 3.0z" fill="#555"/></svg>
<div class="b" style="left:621px;top:210px;width:15px;height:750px;background:#f3f3f3"></div>
<div class="b" style="left:621px;top:195px;width:15px;height:15px;border:1px solid #ababab;box-sizing:border-box;background:#fff"></div>
<svg class="b" style="left:625px;top:200px" width="8" height="4" viewBox="0 0 8 4"><path d="M0 4h8l-4-4z" fill="#777"/></svg>
<div class="b" style="left:621px;top:210px;width:15px;height:188px;border:1px solid #ababab;box-sizing:border-box;background:#fff"></div>
<div class="b" style="left:621px;top:959px;width:15px;height:15px;border:1px solid #ababab;box-sizing:border-box;background:#fff"></div>
<svg class="b" style="left:625px;top:965px" width="8" height="4" viewBox="0 0 8 4"><path d="M0 0h8l-4 4z" fill="#777"/></svg>
<div class="b" style="left:1px;top:973px;width:638px;height:28px;background:#f3f3f3"></div>
<div class="b" style="left:1px;top:972px;width:617px;height:1px;background:#ababab"></div>
<svg class="b" style="left:28px;top:983px" width="5" height="8" viewBox="0 0 5 8"><path d="M5 0v8l-5-4z" fill="#c6c6c6"/></svg>
<svg class="b" style="left:57px;top:983px" width="5" height="8" viewBox="0 0 5 8"><path d="M0 0v8l5-4z" fill="#c6c6c6"/></svg>
<div class="b" style="left:101px;top:973px;width:97px;height:25px;background:#fff;border-bottom:2px solid #217346;border-right:1px solid #ababab;border-left:1px solid #ababab;box-sizing:border-box"></div>
<span class="t" style="left:113.0px;top:977.39px;font-size:13.3px;color:#217346;transform:scaleX(0.9205);font-weight:bold;">JEFirearms1</span>
<svg class="b" style="left:231px;top:978px" width="16" height="16" viewBox="0 0 16 16"><circle cx="8" cy="8" r="7" fill="none" stroke="#777" stroke-width="1.2"/><path d="M4.5 8h7M8 4.5v7" stroke="#777" stroke-width="1.6"/></svg>
<div class="b" style="left:384px;top:983px;width:2px;height:2px;background:#c0c0c0"></div>
<div class="b" style="left:384px;top:987px;width:2px;height:2px;background:#c0c0c0"></div>
<div class="b" style="left:384px;top:991px;width:2px;height:2px;background:#c0c0c0"></div>
<div class="b" style="left:401px;top:980px;width:217px;height:15px;background:#e8e8e8"></div>
<div class="b" style="left:401px;top:980px;width:15px;height:15px;border:1px solid #ababab;box-sizing:border-box;background:#fff"></div>
<svg class="b" style="left:406px;top:984px" width="4" height="8" viewBox="0 0 4 8"><path d="M4 0v7l-4-3.5z" fill="#777"/></svg>
<div class="b" style="left:603px;top:980px;width:15px;height:15px;border:1px solid #ababab;box-sizing:border-box;background:#fff"></div>
<svg class="b" style="left:609px;top:984px" width="4" height="8" viewBox="0 0 4 8"><path d="M0 0v7l4-3.5z" fill="#777"/></svg>
<div class="b" style="left:459px;top:980px;width:20px;height:15px;border:1px solid #ababab;box-sizing:border-box;background:#fff"></div>
<div class="b" style="left:1px;top:1001px;width:638px;height:21px;background:#217346"></div>
<span class="t" style="left:7.5px;top:1002.84px;font-size:12px;color:#fff;transform:scaleX(0.9226);">Select dest...</span><span class="t" style="left:91.5px;top:1002.84px;font-size:12px;color:#fff;transform:scaleX(0.8633);">AVERAGE: 8.375</span><span class="t" style="left:188.5px;top:1002.84px;font-size:12px;color:#fff;transform:scaleX(0.8965);">COUNT: 79</span><span class="t" style="left:259.5px;top:1002.84px;font-size:12px;color:#fff;transform:scaleX(0.8996);">SUM: 16.75</span>
<div class="b" style="left:336px;top:1001px;width:38px;height:21px;background:#0e6537"></div>
<svg class="b" style="left:348px;top:1005px" width="13" height="13" viewBox="0 0 13 13"><path d="M0.5 0.5h12v12h-12zM0.5 4.5h12M0.5 8.5h12M4.5 0.5v12M8.5 0.5v12" stroke="#fff" fill="none" stroke-width="1.3"/></svg>
<svg class="b" style="left:386px;top:1005px" width="14" height="13" viewBox="0 0 14 13"><path d="M0.5 0.5h13v12h-13z" stroke="#fff" fill="none" stroke-width="1.2"/><path d="M3.5 2.5h7v8h-7z" stroke="#fff" fill="none"/><path d="M5 4.5h4M5 6.5h4M5 8.5h4" stroke="#fff"/></svg>
<svg class="b" style="left:424px;top:1005px" width="14" height="13" viewBox="0 0 14 13"><path d="M0.5 0.5h13v12h-13z" stroke="#fff" fill="none" stroke-width="1.2"/><path d="M1 1h3.5v6.500h-3.500zM5.500 1h3.500v6.500h-3.500z" fill="#fff" opacity=".9"/><path d="M1 8h8.500v-7" stroke="#fff" fill="none"/></svg>
<div class="b" style="left:455px;top:1011px;width:6px;height:2px;background:#fff"></div>
<div class="b" style="left:465px;top:1011px;width:101px;height:1px;background:#fff"></div>
<div class="b" style="left:513px;top:1006px;width:4px;height:11px;background:#fff"></div>
<div class="b" style="left:569px;top:1011px;width:8px;height:2px;background:#fff"></div>
<div class="b" style="left:572px;top:1008px;width:2px;height:8px;background:#fff"></div>
<span class="t" style="left:591.5px;top:1002.84px;font-size:12px;color:#fff;transform:scaleX(0.8797);">100%</span>
<div class="b" style="left:0px;top:0px;width:640px;height:1022px;border:1px solid #217346;box-sizing:border-box;pointer-events:none"></div>
</div>
</body></html>
